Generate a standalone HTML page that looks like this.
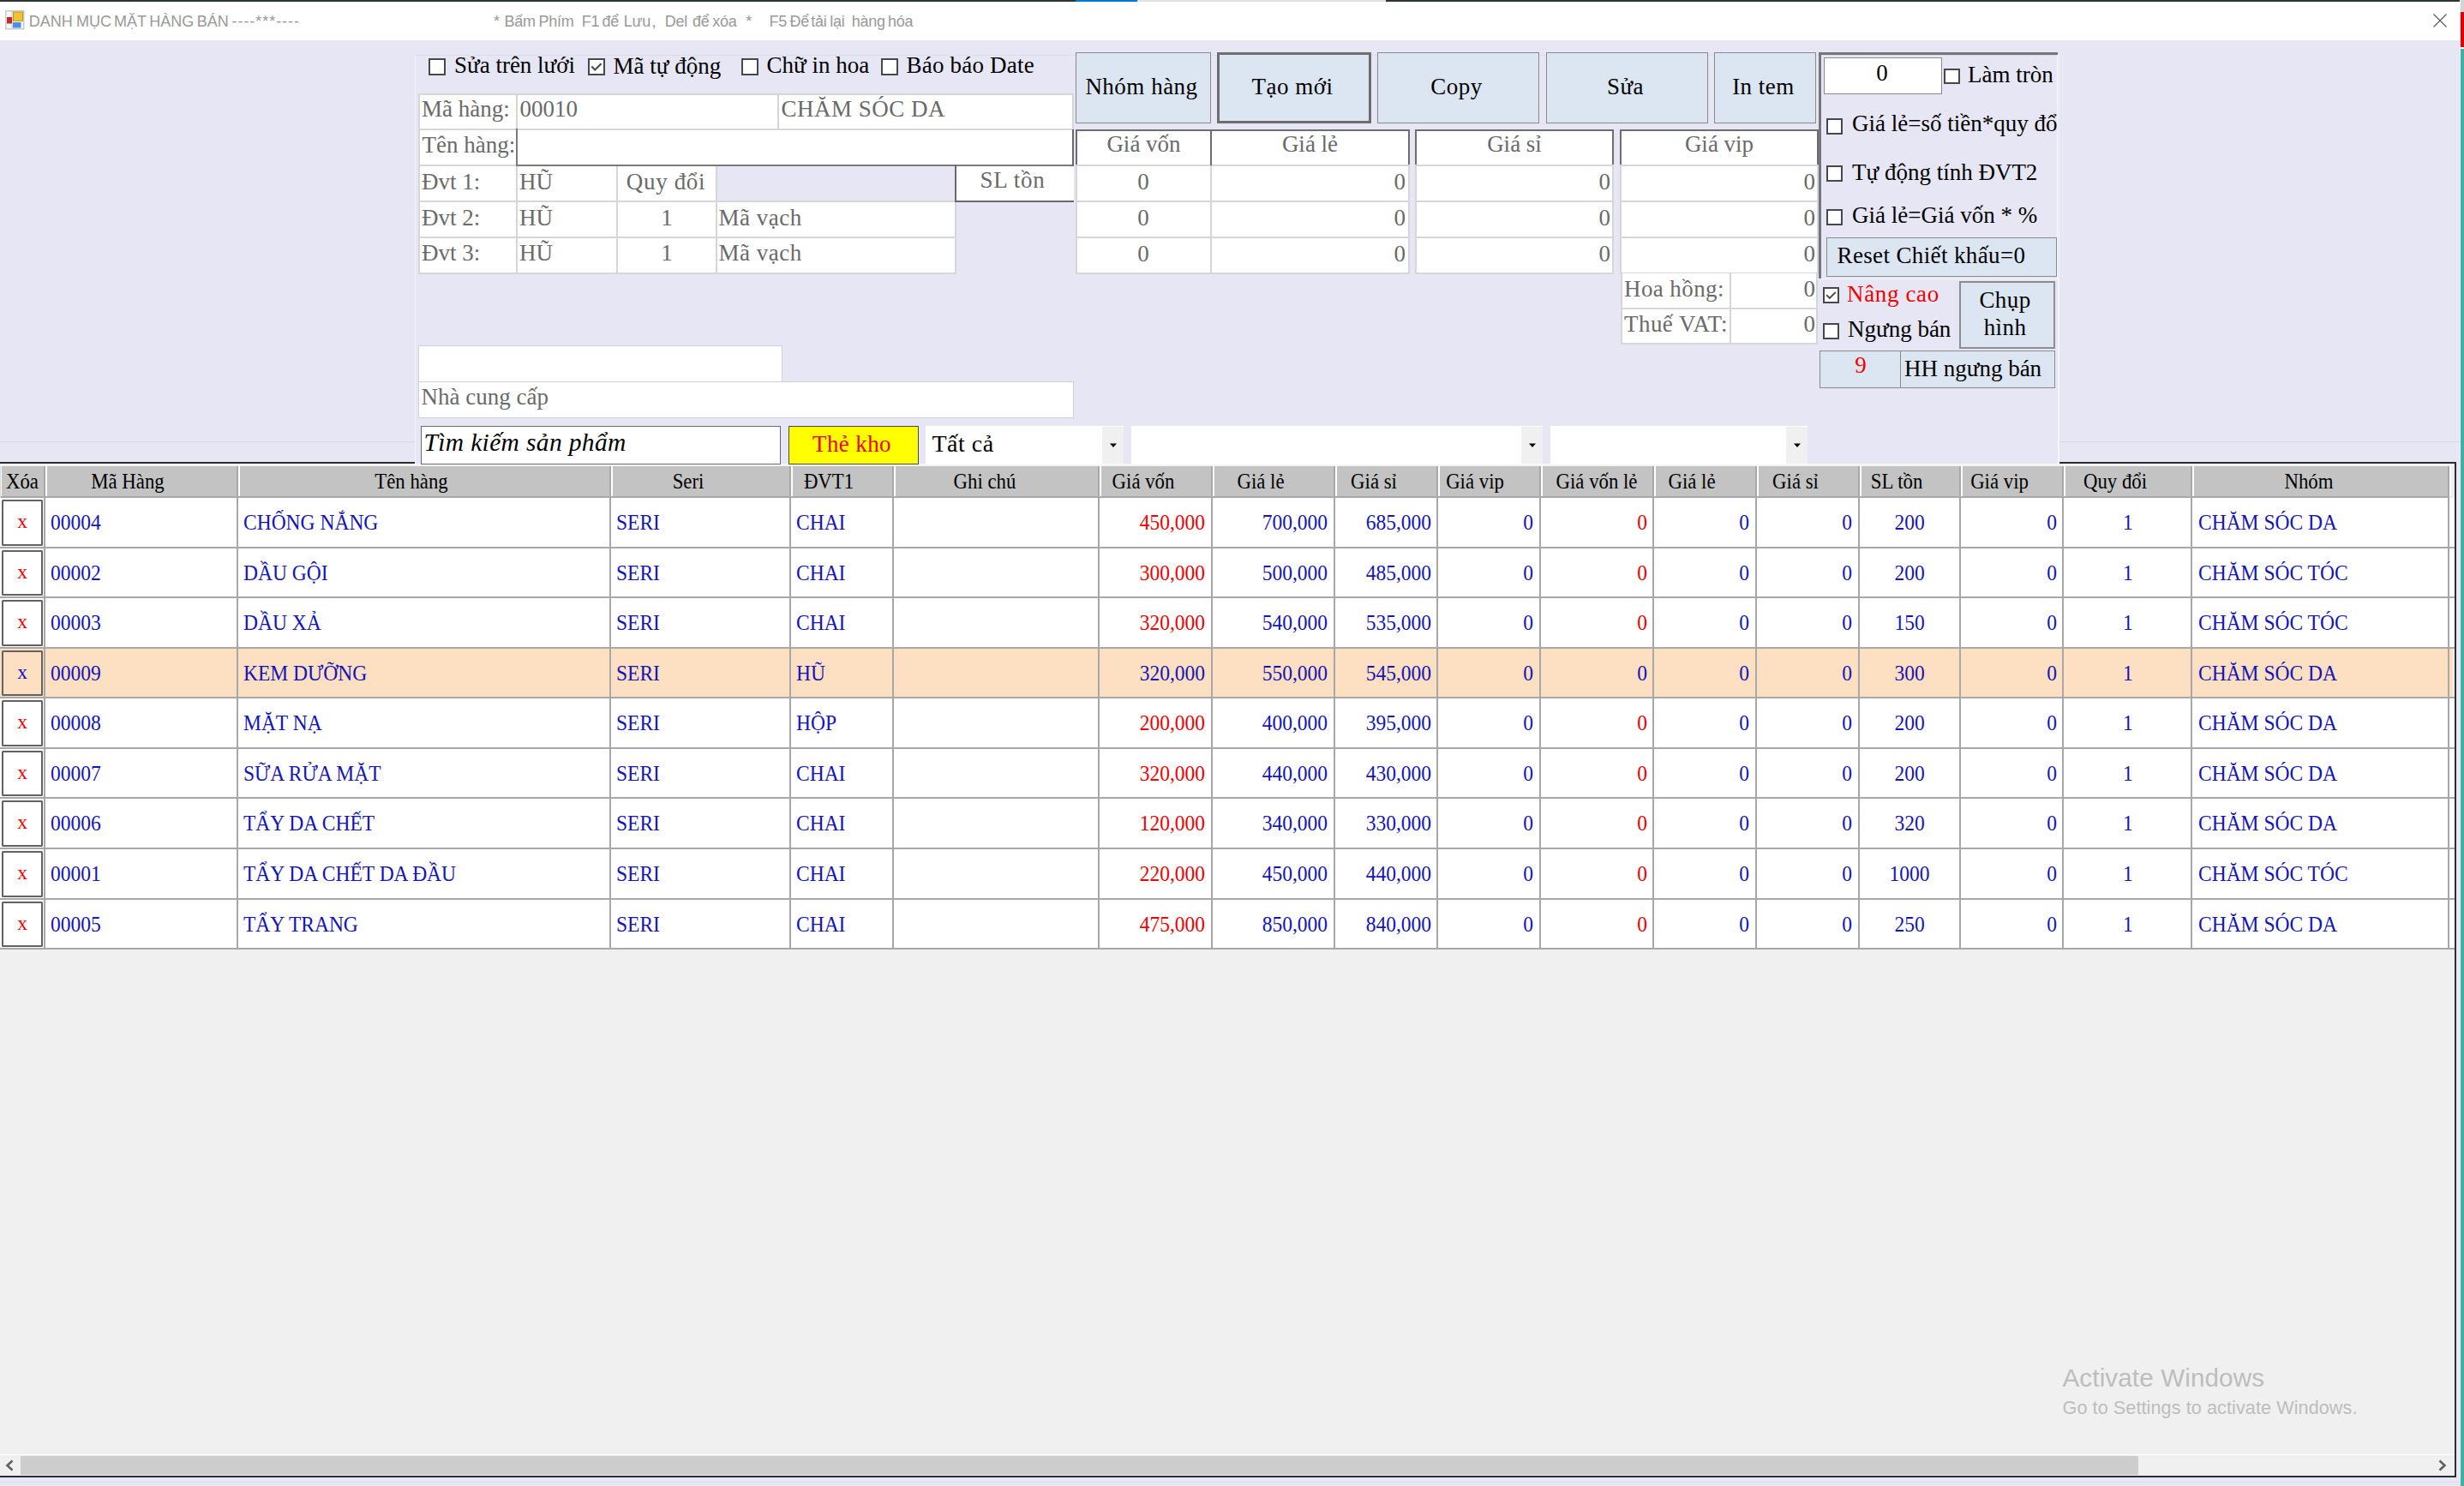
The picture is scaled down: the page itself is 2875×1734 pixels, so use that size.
<!DOCTYPE html><html><head><meta charset="utf-8"><title>DANH MỤC MẶT HÀNG BÁN</title><style>html,body{margin:0;padding:0;}body{width:2875px;height:1734px;position:relative;overflow:hidden;background:#E6E6F4;}body>div,body>svg{position:absolute;}</style></head><body><div style="left:0px;top:0px;width:2871px;height:47px;background:#FFFFFF;"></div><div style="left:0px;top:47px;width:2871px;height:1687px;background:#E6E6F4;"></div><div style="left:0px;top:0px;width:1255px;height:2px;background:#2B3632;"></div><div style="left:1255px;top:0px;width:72px;height:2px;background:#0078D7;"></div><div style="left:1327px;top:0px;width:290px;height:2px;background:#E2E2E2;"></div><div style="left:1617px;top:0px;width:1254px;height:2px;background:#2B3632;"></div><div style="left:2870px;top:0px;width:1px;height:1734px;background:#F4F4F8;"></div><div style="left:2871px;top:0px;width:4px;height:14px;background:#D4D4D4;"></div><div style="left:2871px;top:14px;width:4px;height:41px;background:#E00000;"></div><div style="left:2871px;top:55px;width:4px;height:2px;background:#FFFFFF;"></div><div style="left:2871px;top:57px;width:4px;height:1677px;background:#3EB0A4;"></div><svg style="left:6px;top:12px" width="23" height="23" viewBox="0 0 23 23"><rect x="0.8" y="0.8" width="21" height="21" fill="#F8F8F8" stroke="#BDBDBD" stroke-width="1.2"/><line x1="8" y1="1" x2="8" y2="22" stroke="#C8C8C8" stroke-width="1"/><rect x="2" y="8" width="6" height="7.5" fill="#C0292B"/><rect x="9.5" y="2" width="11" height="10.5" fill="#F2C230" stroke="#B08A10" stroke-width="0.8"/><rect x="9" y="14" width="9.5" height="6.5" fill="#4A90E2"/></svg><div style="top:15.92px;font-family:'Liberation Sans', sans-serif;font-size:18px;line-height:18px;color:#999999;white-space:pre;left:33.80px;">DANH</div><div style="top:15.92px;font-family:'Liberation Sans', sans-serif;font-size:18px;line-height:18px;color:#999999;white-space:pre;left:89.10px;">MỤC</div><div style="top:15.92px;font-family:'Liberation Sans', sans-serif;font-size:18px;line-height:18px;color:#999999;white-space:pre;left:132.90px;">MẶT</div><div style="top:15.92px;font-family:'Liberation Sans', sans-serif;font-size:18px;line-height:18px;color:#999999;white-space:pre;left:174.30px;">HÀNG</div><div style="top:15.92px;font-family:'Liberation Sans', sans-serif;font-size:18px;line-height:18px;color:#999999;white-space:pre;left:229.80px;">BÁN</div><div style="top:15.92px;font-family:'Liberation Sans', sans-serif;font-size:18px;line-height:18px;color:#999999;white-space:pre;left:270.50px;letter-spacing:0.95px;">----***----</div><div style="top:15.92px;font-family:'Liberation Sans', sans-serif;font-size:18px;line-height:18px;color:#999999;white-space:pre;left:575.90px;letter-spacing:-0.25px;">*</div><div style="top:15.92px;font-family:'Liberation Sans', sans-serif;font-size:18px;line-height:18px;color:#999999;white-space:pre;left:588.50px;letter-spacing:-0.25px;">Bấm</div><div style="top:15.92px;font-family:'Liberation Sans', sans-serif;font-size:18px;line-height:18px;color:#999999;white-space:pre;left:628.60px;letter-spacing:-0.25px;">Phím</div><div style="top:15.92px;font-family:'Liberation Sans', sans-serif;font-size:18px;line-height:18px;color:#999999;white-space:pre;left:678.80px;letter-spacing:-0.25px;">F1</div><div style="top:15.92px;font-family:'Liberation Sans', sans-serif;font-size:18px;line-height:18px;color:#999999;white-space:pre;left:702.50px;letter-spacing:-0.25px;">để</div><div style="top:15.92px;font-family:'Liberation Sans', sans-serif;font-size:18px;line-height:18px;color:#999999;white-space:pre;left:727.80px;letter-spacing:-0.25px;">Lưu</div><div style="top:15.92px;font-family:'Liberation Sans', sans-serif;font-size:18px;line-height:18px;color:#999999;white-space:pre;left:760.50px;letter-spacing:-0.25px;">,</div><div style="top:15.92px;font-family:'Liberation Sans', sans-serif;font-size:18px;line-height:18px;color:#999999;white-space:pre;left:775.80px;letter-spacing:-0.25px;">Del</div><div style="top:15.92px;font-family:'Liberation Sans', sans-serif;font-size:18px;line-height:18px;color:#999999;white-space:pre;left:808.00px;letter-spacing:-0.25px;">để</div><div style="top:15.92px;font-family:'Liberation Sans', sans-serif;font-size:18px;line-height:18px;color:#999999;white-space:pre;left:831.20px;letter-spacing:-0.25px;">xóa</div><div style="top:15.92px;font-family:'Liberation Sans', sans-serif;font-size:18px;line-height:18px;color:#999999;white-space:pre;left:870.20px;letter-spacing:-0.25px;">*</div><div style="top:15.92px;font-family:'Liberation Sans', sans-serif;font-size:18px;line-height:18px;color:#999999;white-space:pre;left:897.60px;letter-spacing:-0.25px;">F5</div><div style="top:15.92px;font-family:'Liberation Sans', sans-serif;font-size:18px;line-height:18px;color:#999999;white-space:pre;left:921.40px;letter-spacing:-0.25px;">Để</div><div style="top:15.92px;font-family:'Liberation Sans', sans-serif;font-size:18px;line-height:18px;color:#999999;white-space:pre;left:946.20px;letter-spacing:-0.25px;">tải</div><div style="top:15.92px;font-family:'Liberation Sans', sans-serif;font-size:18px;line-height:18px;color:#999999;white-space:pre;left:968.30px;letter-spacing:-0.25px;">lại</div><div style="top:15.92px;font-family:'Liberation Sans', sans-serif;font-size:18px;line-height:18px;color:#999999;white-space:pre;left:993.70px;letter-spacing:-0.25px;">hàng</div><div style="top:15.92px;font-family:'Liberation Sans', sans-serif;font-size:18px;line-height:18px;color:#999999;white-space:pre;left:1035.90px;letter-spacing:-0.25px;">hóa</div><svg style="left:2839px;top:16px" width="16" height="16" viewBox="0 0 16 16"><path d="M0.5 0.5 L15.5 15.5 M15.5 0.5 L0.5 15.5" stroke="#555" stroke-width="1.1"/></svg><div style="left:0px;top:515px;width:2871px;height:1px;background:#D8D8E6;"></div><div style="left:0px;top:539px;width:2866px;height:2px;background:#2C2C2C;"></div><div style="left:0px;top:541px;width:2864px;height:1181px;background:#F0F0F0;"></div><div style="left:0px;top:1722px;width:2866px;height:2px;background:#2C2C2C;"></div><div style="left:2864px;top:539px;width:2px;height:1185px;background:#2C2C2C;"></div><div style="left:0px;top:1724px;width:2871px;height:10px;background:#E6E6F4;"></div><div style="left:0px;top:1729px;width:2871px;height:1px;background:#DCDCEA;"></div><div style="left:0px;top:541px;width:2864px;height:3px;background:#F4F4F4;"></div><div style="left:0px;top:544px;width:2858px;height:35px;background:#C3C3C3;"></div><div style="left:0px;top:579px;width:2858px;height:2px;background:#A8A8A8;"></div><div style="left:0px;top:544px;width:1px;height:37px;background:#D8D8D8;"></div><div style="left:1px;top:544px;width:1px;height:35px;background:#FFFFFF;"></div><div style="top:549.98px;font-family:'Liberation Serif', serif;font-size:24.5px;line-height:24.5px;color:#000;white-space:pre;left:-124.30px;width:300px;text-align:center;transform:scaleX(0.93);transform-origin:center 50%;">Xóa</div><div style="top:549.98px;font-family:'Liberation Serif', serif;font-size:24.5px;line-height:24.5px;color:#000;white-space:pre;left:-1.20px;width:300px;text-align:center;transform:scaleX(0.93);transform-origin:center 50%;">Mã Hàng</div><div style="top:549.98px;font-family:'Liberation Serif', serif;font-size:24.5px;line-height:24.5px;color:#000;white-space:pre;left:330.20px;width:300px;text-align:center;transform:scaleX(0.93);transform-origin:center 50%;">Tên hàng</div><div style="top:549.98px;font-family:'Liberation Serif', serif;font-size:24.5px;line-height:24.5px;color:#000;white-space:pre;left:652.50px;width:300px;text-align:center;transform:scaleX(0.93);transform-origin:center 50%;">Seri</div><div style="top:549.98px;font-family:'Liberation Serif', serif;font-size:24.5px;line-height:24.5px;color:#000;white-space:pre;left:816.70px;width:300px;text-align:center;transform:scaleX(0.93);transform-origin:center 50%;">ĐVT1</div><div style="top:549.98px;font-family:'Liberation Serif', serif;font-size:24.5px;line-height:24.5px;color:#000;white-space:pre;left:998.50px;width:300px;text-align:center;transform:scaleX(0.93);transform-origin:center 50%;">Ghi chú</div><div style="top:549.98px;font-family:'Liberation Serif', serif;font-size:24.5px;line-height:24.5px;color:#000;white-space:pre;left:1183.60px;width:300px;text-align:center;transform:scaleX(0.93);transform-origin:center 50%;">Giá vốn</div><div style="top:549.98px;font-family:'Liberation Serif', serif;font-size:24.5px;line-height:24.5px;color:#000;white-space:pre;left:1321.10px;width:300px;text-align:center;transform:scaleX(0.93);transform-origin:center 50%;">Giá lẻ</div><div style="top:549.98px;font-family:'Liberation Serif', serif;font-size:24.5px;line-height:24.5px;color:#000;white-space:pre;left:1453.10px;width:300px;text-align:center;transform:scaleX(0.93);transform-origin:center 50%;">Giá sỉ</div><div style="top:549.98px;font-family:'Liberation Serif', serif;font-size:24.5px;line-height:24.5px;color:#000;white-space:pre;left:1571.40px;width:300px;text-align:center;transform:scaleX(0.93);transform-origin:center 50%;">Giá vip</div><div style="top:549.98px;font-family:'Liberation Serif', serif;font-size:24.5px;line-height:24.5px;color:#000;white-space:pre;left:1713.20px;width:300px;text-align:center;transform:scaleX(0.93);transform-origin:center 50%;">Giá vốn lẻ</div><div style="top:549.98px;font-family:'Liberation Serif', serif;font-size:24.5px;line-height:24.5px;color:#000;white-space:pre;left:1824.20px;width:300px;text-align:center;transform:scaleX(0.93);transform-origin:center 50%;">Giá lẻ</div><div style="top:549.98px;font-family:'Liberation Serif', serif;font-size:24.5px;line-height:24.5px;color:#000;white-space:pre;left:1944.70px;width:300px;text-align:center;transform:scaleX(0.93);transform-origin:center 50%;">Giá sỉ</div><div style="top:549.98px;font-family:'Liberation Serif', serif;font-size:24.5px;line-height:24.5px;color:#000;white-space:pre;left:2063.20px;width:300px;text-align:center;transform:scaleX(0.93);transform-origin:center 50%;">SL tồn</div><div style="top:549.98px;font-family:'Liberation Serif', serif;font-size:24.5px;line-height:24.5px;color:#000;white-space:pre;left:2182.80px;width:300px;text-align:center;transform:scaleX(0.93);transform-origin:center 50%;">Giá vip</div><div style="top:549.98px;font-family:'Liberation Serif', serif;font-size:24.5px;line-height:24.5px;color:#000;white-space:pre;left:2317.60px;width:300px;text-align:center;transform:scaleX(0.93);transform-origin:center 50%;">Quy đổi</div><div style="top:549.98px;font-family:'Liberation Serif', serif;font-size:24.5px;line-height:24.5px;color:#000;white-space:pre;left:2543.80px;width:300px;text-align:center;transform:scaleX(0.93);transform-origin:center 50%;">Nhóm</div><div style="left:51px;top:544px;width:2px;height:35px;background:#A8A8A8;"></div><div style="left:53px;top:544px;width:2px;height:35px;background:#FFFFFF;"></div><div style="left:276px;top:544px;width:2px;height:35px;background:#A8A8A8;"></div><div style="left:278px;top:544px;width:2px;height:35px;background:#FFFFFF;"></div><div style="left:711px;top:544px;width:2px;height:35px;background:#A8A8A8;"></div><div style="left:713px;top:544px;width:2px;height:35px;background:#FFFFFF;"></div><div style="left:921px;top:544px;width:2px;height:35px;background:#A8A8A8;"></div><div style="left:923px;top:544px;width:2px;height:35px;background:#FFFFFF;"></div><div style="left:1041px;top:544px;width:2px;height:35px;background:#A8A8A8;"></div><div style="left:1043px;top:544px;width:2px;height:35px;background:#FFFFFF;"></div><div style="left:1281px;top:544px;width:2px;height:35px;background:#A8A8A8;"></div><div style="left:1283px;top:544px;width:2px;height:35px;background:#FFFFFF;"></div><div style="left:1413px;top:544px;width:2px;height:35px;background:#A8A8A8;"></div><div style="left:1415px;top:544px;width:2px;height:35px;background:#FFFFFF;"></div><div style="left:1556px;top:544px;width:2px;height:35px;background:#A8A8A8;"></div><div style="left:1558px;top:544px;width:2px;height:35px;background:#FFFFFF;"></div><div style="left:1676px;top:544px;width:2px;height:35px;background:#A8A8A8;"></div><div style="left:1678px;top:544px;width:2px;height:35px;background:#FFFFFF;"></div><div style="left:1796px;top:544px;width:2px;height:35px;background:#A8A8A8;"></div><div style="left:1798px;top:544px;width:2px;height:35px;background:#FFFFFF;"></div><div style="left:1928px;top:544px;width:2px;height:35px;background:#A8A8A8;"></div><div style="left:1930px;top:544px;width:2px;height:35px;background:#FFFFFF;"></div><div style="left:2048px;top:544px;width:2px;height:35px;background:#A8A8A8;"></div><div style="left:2050px;top:544px;width:2px;height:35px;background:#FFFFFF;"></div><div style="left:2168px;top:544px;width:2px;height:35px;background:#A8A8A8;"></div><div style="left:2170px;top:544px;width:2px;height:35px;background:#FFFFFF;"></div><div style="left:2286px;top:544px;width:2px;height:35px;background:#A8A8A8;"></div><div style="left:2288px;top:544px;width:2px;height:35px;background:#FFFFFF;"></div><div style="left:2406px;top:544px;width:2px;height:35px;background:#A8A8A8;"></div><div style="left:2408px;top:544px;width:2px;height:35px;background:#FFFFFF;"></div><div style="left:2556px;top:544px;width:2px;height:35px;background:#A8A8A8;"></div><div style="left:2558px;top:544px;width:2px;height:35px;background:#FFFFFF;"></div><div style="left:2856px;top:544px;width:2px;height:35px;background:#A8A8A8;"></div><div style="left:2858px;top:544px;width:2px;height:35px;background:#FFFFFF;"></div><div style="left:0px;top:581px;width:2864px;height:57px;background:#FFFFFF;"></div><div style="left:2858px;top:581px;width:6px;height:57px;background:#FFFFFF;"></div><div style="left:0px;top:638px;width:2864px;height:2px;background:#A8A8A8;"></div><div style="left:51px;top:581px;width:2px;height:59px;background:#A8A8A8;"></div><div style="left:276px;top:581px;width:2px;height:59px;background:#A8A8A8;"></div><div style="left:711px;top:581px;width:2px;height:59px;background:#A8A8A8;"></div><div style="left:921px;top:581px;width:2px;height:59px;background:#A8A8A8;"></div><div style="left:1041px;top:581px;width:2px;height:59px;background:#A8A8A8;"></div><div style="left:1281px;top:581px;width:2px;height:59px;background:#A8A8A8;"></div><div style="left:1413px;top:581px;width:2px;height:59px;background:#A8A8A8;"></div><div style="left:1556px;top:581px;width:2px;height:59px;background:#A8A8A8;"></div><div style="left:1676px;top:581px;width:2px;height:59px;background:#A8A8A8;"></div><div style="left:1796px;top:581px;width:2px;height:59px;background:#A8A8A8;"></div><div style="left:1928px;top:581px;width:2px;height:59px;background:#A8A8A8;"></div><div style="left:2048px;top:581px;width:2px;height:59px;background:#A8A8A8;"></div><div style="left:2168px;top:581px;width:2px;height:59px;background:#A8A8A8;"></div><div style="left:2286px;top:581px;width:2px;height:59px;background:#A8A8A8;"></div><div style="left:2406px;top:581px;width:2px;height:59px;background:#A8A8A8;"></div><div style="left:2556px;top:581px;width:2px;height:59px;background:#A8A8A8;"></div><div style="left:2856px;top:581px;width:2px;height:59px;background:#A8A8A8;"></div><div style="left:2px;top:583px;width:48px;height:54px;background:#FFFFFF;border:2px solid #626262;box-sizing:border-box;border-radius:1.5px;"></div><div style="top:597.32px;font-family:'Liberation Serif', serif;font-size:23.5px;line-height:23.5px;color:#F00000;white-space:pre;left:6.00px;width:40px;text-align:center;">x</div><div style="top:597.06px;font-family:'Liberation Serif', serif;font-size:25px;line-height:25px;color:#1414B8;white-space:pre;left:59.00px;transform:scaleX(0.94);transform-origin:left 50%;">00004</div><div style="top:597.06px;font-family:'Liberation Serif', serif;font-size:25px;line-height:25px;color:#1414B8;white-space:pre;left:284.00px;transform:scaleX(0.94);transform-origin:left 50%;">CHỐNG NẮNG</div><div style="top:597.06px;font-family:'Liberation Serif', serif;font-size:25px;line-height:25px;color:#1414B8;white-space:pre;left:719.00px;transform:scaleX(0.94);transform-origin:left 50%;">SERI</div><div style="top:597.06px;font-family:'Liberation Serif', serif;font-size:25px;line-height:25px;color:#1414B8;white-space:pre;left:929.00px;transform:scaleX(0.94);transform-origin:left 50%;">CHAI</div><div style="top:597.06px;font-family:'Liberation Serif', serif;font-size:25px;line-height:25px;color:#F00000;white-space:pre;left:1206.00px;width:200px;text-align:right;transform:scaleX(0.94);transform-origin:right 50%;">450,000</div><div style="top:597.06px;font-family:'Liberation Serif', serif;font-size:25px;line-height:25px;color:#1414B8;white-space:pre;left:1349.00px;width:200px;text-align:right;transform:scaleX(0.94);transform-origin:right 50%;">700,000</div><div style="top:597.06px;font-family:'Liberation Serif', serif;font-size:25px;line-height:25px;color:#1414B8;white-space:pre;left:1470.00px;width:200px;text-align:right;transform:scaleX(0.94);transform-origin:right 50%;">685,000</div><div style="top:597.06px;font-family:'Liberation Serif', serif;font-size:25px;line-height:25px;color:#1414B8;white-space:pre;left:1589.00px;width:200px;text-align:right;transform:scaleX(0.94);transform-origin:right 50%;">0</div><div style="top:597.06px;font-family:'Liberation Serif', serif;font-size:25px;line-height:25px;color:#F00000;white-space:pre;left:1722.00px;width:200px;text-align:right;transform:scaleX(0.94);transform-origin:right 50%;">0</div><div style="top:597.06px;font-family:'Liberation Serif', serif;font-size:25px;line-height:25px;color:#1414B8;white-space:pre;left:1841.00px;width:200px;text-align:right;transform:scaleX(0.94);transform-origin:right 50%;">0</div><div style="top:597.06px;font-family:'Liberation Serif', serif;font-size:25px;line-height:25px;color:#1414B8;white-space:pre;left:1961.00px;width:200px;text-align:right;transform:scaleX(0.94);transform-origin:right 50%;">0</div><div style="top:597.06px;font-family:'Liberation Serif', serif;font-size:25px;line-height:25px;color:#1414B8;white-space:pre;left:2200.00px;width:200px;text-align:right;transform:scaleX(0.94);transform-origin:right 50%;">0</div><div style="top:597.06px;font-family:'Liberation Serif', serif;font-size:25px;line-height:25px;color:#1414B8;white-space:pre;left:2172.50px;width:110px;text-align:center;transform:scaleX(0.94);transform-origin:center 50%;">200</div><div style="top:597.06px;font-family:'Liberation Serif', serif;font-size:25px;line-height:25px;color:#1414B8;white-space:pre;left:2413.00px;width:140px;text-align:center;transform:scaleX(0.94);transform-origin:center 50%;">1</div><div style="top:597.06px;font-family:'Liberation Serif', serif;font-size:25px;line-height:25px;color:#1414B8;white-space:pre;left:2565.00px;transform:scaleX(0.94);transform-origin:left 50%;">CHĂM SÓC DA</div><div style="left:0px;top:640px;width:2864px;height:56px;background:#FFFFFF;"></div><div style="left:2858px;top:640px;width:6px;height:56px;background:#FFFFFF;"></div><div style="left:0px;top:696px;width:2864px;height:2px;background:#A8A8A8;"></div><div style="left:51px;top:640px;width:2px;height:58px;background:#A8A8A8;"></div><div style="left:276px;top:640px;width:2px;height:58px;background:#A8A8A8;"></div><div style="left:711px;top:640px;width:2px;height:58px;background:#A8A8A8;"></div><div style="left:921px;top:640px;width:2px;height:58px;background:#A8A8A8;"></div><div style="left:1041px;top:640px;width:2px;height:58px;background:#A8A8A8;"></div><div style="left:1281px;top:640px;width:2px;height:58px;background:#A8A8A8;"></div><div style="left:1413px;top:640px;width:2px;height:58px;background:#A8A8A8;"></div><div style="left:1556px;top:640px;width:2px;height:58px;background:#A8A8A8;"></div><div style="left:1676px;top:640px;width:2px;height:58px;background:#A8A8A8;"></div><div style="left:1796px;top:640px;width:2px;height:58px;background:#A8A8A8;"></div><div style="left:1928px;top:640px;width:2px;height:58px;background:#A8A8A8;"></div><div style="left:2048px;top:640px;width:2px;height:58px;background:#A8A8A8;"></div><div style="left:2168px;top:640px;width:2px;height:58px;background:#A8A8A8;"></div><div style="left:2286px;top:640px;width:2px;height:58px;background:#A8A8A8;"></div><div style="left:2406px;top:640px;width:2px;height:58px;background:#A8A8A8;"></div><div style="left:2556px;top:640px;width:2px;height:58px;background:#A8A8A8;"></div><div style="left:2856px;top:640px;width:2px;height:58px;background:#A8A8A8;"></div><div style="left:2px;top:642px;width:48px;height:53px;background:#FFFFFF;border:2px solid #626262;box-sizing:border-box;border-radius:1.5px;"></div><div style="top:656.32px;font-family:'Liberation Serif', serif;font-size:23.5px;line-height:23.5px;color:#F00000;white-space:pre;left:6.00px;width:40px;text-align:center;">x</div><div style="top:656.06px;font-family:'Liberation Serif', serif;font-size:25px;line-height:25px;color:#1414B8;white-space:pre;left:59.00px;transform:scaleX(0.94);transform-origin:left 50%;">00002</div><div style="top:656.06px;font-family:'Liberation Serif', serif;font-size:25px;line-height:25px;color:#1414B8;white-space:pre;left:284.00px;transform:scaleX(0.94);transform-origin:left 50%;">DẦU GỘI</div><div style="top:656.06px;font-family:'Liberation Serif', serif;font-size:25px;line-height:25px;color:#1414B8;white-space:pre;left:719.00px;transform:scaleX(0.94);transform-origin:left 50%;">SERI</div><div style="top:656.06px;font-family:'Liberation Serif', serif;font-size:25px;line-height:25px;color:#1414B8;white-space:pre;left:929.00px;transform:scaleX(0.94);transform-origin:left 50%;">CHAI</div><div style="top:656.06px;font-family:'Liberation Serif', serif;font-size:25px;line-height:25px;color:#F00000;white-space:pre;left:1206.00px;width:200px;text-align:right;transform:scaleX(0.94);transform-origin:right 50%;">300,000</div><div style="top:656.06px;font-family:'Liberation Serif', serif;font-size:25px;line-height:25px;color:#1414B8;white-space:pre;left:1349.00px;width:200px;text-align:right;transform:scaleX(0.94);transform-origin:right 50%;">500,000</div><div style="top:656.06px;font-family:'Liberation Serif', serif;font-size:25px;line-height:25px;color:#1414B8;white-space:pre;left:1470.00px;width:200px;text-align:right;transform:scaleX(0.94);transform-origin:right 50%;">485,000</div><div style="top:656.06px;font-family:'Liberation Serif', serif;font-size:25px;line-height:25px;color:#1414B8;white-space:pre;left:1589.00px;width:200px;text-align:right;transform:scaleX(0.94);transform-origin:right 50%;">0</div><div style="top:656.06px;font-family:'Liberation Serif', serif;font-size:25px;line-height:25px;color:#F00000;white-space:pre;left:1722.00px;width:200px;text-align:right;transform:scaleX(0.94);transform-origin:right 50%;">0</div><div style="top:656.06px;font-family:'Liberation Serif', serif;font-size:25px;line-height:25px;color:#1414B8;white-space:pre;left:1841.00px;width:200px;text-align:right;transform:scaleX(0.94);transform-origin:right 50%;">0</div><div style="top:656.06px;font-family:'Liberation Serif', serif;font-size:25px;line-height:25px;color:#1414B8;white-space:pre;left:1961.00px;width:200px;text-align:right;transform:scaleX(0.94);transform-origin:right 50%;">0</div><div style="top:656.06px;font-family:'Liberation Serif', serif;font-size:25px;line-height:25px;color:#1414B8;white-space:pre;left:2200.00px;width:200px;text-align:right;transform:scaleX(0.94);transform-origin:right 50%;">0</div><div style="top:656.06px;font-family:'Liberation Serif', serif;font-size:25px;line-height:25px;color:#1414B8;white-space:pre;left:2172.50px;width:110px;text-align:center;transform:scaleX(0.94);transform-origin:center 50%;">200</div><div style="top:656.06px;font-family:'Liberation Serif', serif;font-size:25px;line-height:25px;color:#1414B8;white-space:pre;left:2413.00px;width:140px;text-align:center;transform:scaleX(0.94);transform-origin:center 50%;">1</div><div style="top:656.06px;font-family:'Liberation Serif', serif;font-size:25px;line-height:25px;color:#1414B8;white-space:pre;left:2565.00px;transform:scaleX(0.94);transform-origin:left 50%;">CHĂM SÓC TÓC</div><div style="left:0px;top:698px;width:2864px;height:57px;background:#FFFFFF;"></div><div style="left:2858px;top:698px;width:6px;height:57px;background:#FFFFFF;"></div><div style="left:0px;top:755px;width:2864px;height:2px;background:#A8A8A8;"></div><div style="left:51px;top:698px;width:2px;height:59px;background:#A8A8A8;"></div><div style="left:276px;top:698px;width:2px;height:59px;background:#A8A8A8;"></div><div style="left:711px;top:698px;width:2px;height:59px;background:#A8A8A8;"></div><div style="left:921px;top:698px;width:2px;height:59px;background:#A8A8A8;"></div><div style="left:1041px;top:698px;width:2px;height:59px;background:#A8A8A8;"></div><div style="left:1281px;top:698px;width:2px;height:59px;background:#A8A8A8;"></div><div style="left:1413px;top:698px;width:2px;height:59px;background:#A8A8A8;"></div><div style="left:1556px;top:698px;width:2px;height:59px;background:#A8A8A8;"></div><div style="left:1676px;top:698px;width:2px;height:59px;background:#A8A8A8;"></div><div style="left:1796px;top:698px;width:2px;height:59px;background:#A8A8A8;"></div><div style="left:1928px;top:698px;width:2px;height:59px;background:#A8A8A8;"></div><div style="left:2048px;top:698px;width:2px;height:59px;background:#A8A8A8;"></div><div style="left:2168px;top:698px;width:2px;height:59px;background:#A8A8A8;"></div><div style="left:2286px;top:698px;width:2px;height:59px;background:#A8A8A8;"></div><div style="left:2406px;top:698px;width:2px;height:59px;background:#A8A8A8;"></div><div style="left:2556px;top:698px;width:2px;height:59px;background:#A8A8A8;"></div><div style="left:2856px;top:698px;width:2px;height:59px;background:#A8A8A8;"></div><div style="left:2px;top:700px;width:48px;height:54px;background:#FFFFFF;border:2px solid #626262;box-sizing:border-box;border-radius:1.5px;"></div><div style="top:714.32px;font-family:'Liberation Serif', serif;font-size:23.5px;line-height:23.5px;color:#F00000;white-space:pre;left:6.00px;width:40px;text-align:center;">x</div><div style="top:714.06px;font-family:'Liberation Serif', serif;font-size:25px;line-height:25px;color:#1414B8;white-space:pre;left:59.00px;transform:scaleX(0.94);transform-origin:left 50%;">00003</div><div style="top:714.06px;font-family:'Liberation Serif', serif;font-size:25px;line-height:25px;color:#1414B8;white-space:pre;left:284.00px;transform:scaleX(0.94);transform-origin:left 50%;">DẦU XẢ</div><div style="top:714.06px;font-family:'Liberation Serif', serif;font-size:25px;line-height:25px;color:#1414B8;white-space:pre;left:719.00px;transform:scaleX(0.94);transform-origin:left 50%;">SERI</div><div style="top:714.06px;font-family:'Liberation Serif', serif;font-size:25px;line-height:25px;color:#1414B8;white-space:pre;left:929.00px;transform:scaleX(0.94);transform-origin:left 50%;">CHAI</div><div style="top:714.06px;font-family:'Liberation Serif', serif;font-size:25px;line-height:25px;color:#F00000;white-space:pre;left:1206.00px;width:200px;text-align:right;transform:scaleX(0.94);transform-origin:right 50%;">320,000</div><div style="top:714.06px;font-family:'Liberation Serif', serif;font-size:25px;line-height:25px;color:#1414B8;white-space:pre;left:1349.00px;width:200px;text-align:right;transform:scaleX(0.94);transform-origin:right 50%;">540,000</div><div style="top:714.06px;font-family:'Liberation Serif', serif;font-size:25px;line-height:25px;color:#1414B8;white-space:pre;left:1470.00px;width:200px;text-align:right;transform:scaleX(0.94);transform-origin:right 50%;">535,000</div><div style="top:714.06px;font-family:'Liberation Serif', serif;font-size:25px;line-height:25px;color:#1414B8;white-space:pre;left:1589.00px;width:200px;text-align:right;transform:scaleX(0.94);transform-origin:right 50%;">0</div><div style="top:714.06px;font-family:'Liberation Serif', serif;font-size:25px;line-height:25px;color:#F00000;white-space:pre;left:1722.00px;width:200px;text-align:right;transform:scaleX(0.94);transform-origin:right 50%;">0</div><div style="top:714.06px;font-family:'Liberation Serif', serif;font-size:25px;line-height:25px;color:#1414B8;white-space:pre;left:1841.00px;width:200px;text-align:right;transform:scaleX(0.94);transform-origin:right 50%;">0</div><div style="top:714.06px;font-family:'Liberation Serif', serif;font-size:25px;line-height:25px;color:#1414B8;white-space:pre;left:1961.00px;width:200px;text-align:right;transform:scaleX(0.94);transform-origin:right 50%;">0</div><div style="top:714.06px;font-family:'Liberation Serif', serif;font-size:25px;line-height:25px;color:#1414B8;white-space:pre;left:2200.00px;width:200px;text-align:right;transform:scaleX(0.94);transform-origin:right 50%;">0</div><div style="top:714.06px;font-family:'Liberation Serif', serif;font-size:25px;line-height:25px;color:#1414B8;white-space:pre;left:2172.50px;width:110px;text-align:center;transform:scaleX(0.94);transform-origin:center 50%;">150</div><div style="top:714.06px;font-family:'Liberation Serif', serif;font-size:25px;line-height:25px;color:#1414B8;white-space:pre;left:2413.00px;width:140px;text-align:center;transform:scaleX(0.94);transform-origin:center 50%;">1</div><div style="top:714.06px;font-family:'Liberation Serif', serif;font-size:25px;line-height:25px;color:#1414B8;white-space:pre;left:2565.00px;transform:scaleX(0.94);transform-origin:left 50%;">CHĂM SÓC TÓC</div><div style="left:0px;top:757px;width:2862px;height:56px;background:#FDDFC2;"></div><div style="left:0px;top:813px;width:2864px;height:2px;background:#A8A8A8;"></div><div style="left:51px;top:757px;width:2px;height:58px;background:#A8A8A8;"></div><div style="left:276px;top:757px;width:2px;height:58px;background:#A8A8A8;"></div><div style="left:711px;top:757px;width:2px;height:58px;background:#A8A8A8;"></div><div style="left:921px;top:757px;width:2px;height:58px;background:#A8A8A8;"></div><div style="left:1041px;top:757px;width:2px;height:58px;background:#A8A8A8;"></div><div style="left:1281px;top:757px;width:2px;height:58px;background:#A8A8A8;"></div><div style="left:1413px;top:757px;width:2px;height:58px;background:#A8A8A8;"></div><div style="left:1556px;top:757px;width:2px;height:58px;background:#A8A8A8;"></div><div style="left:1676px;top:757px;width:2px;height:58px;background:#A8A8A8;"></div><div style="left:1796px;top:757px;width:2px;height:58px;background:#A8A8A8;"></div><div style="left:1928px;top:757px;width:2px;height:58px;background:#A8A8A8;"></div><div style="left:2048px;top:757px;width:2px;height:58px;background:#A8A8A8;"></div><div style="left:2168px;top:757px;width:2px;height:58px;background:#A8A8A8;"></div><div style="left:2286px;top:757px;width:2px;height:58px;background:#A8A8A8;"></div><div style="left:2406px;top:757px;width:2px;height:58px;background:#A8A8A8;"></div><div style="left:2556px;top:757px;width:2px;height:58px;background:#A8A8A8;"></div><div style="left:2856px;top:757px;width:2px;height:58px;background:#A8A8A8;"></div><div style="left:2px;top:759px;width:48px;height:53px;background:#FDDFC2;border:2px solid #626262;box-sizing:border-box;border-radius:1.5px;"></div><div style="top:773.32px;font-family:'Liberation Serif', serif;font-size:23.5px;line-height:23.5px;color:#1414B8;white-space:pre;left:6.00px;width:40px;text-align:center;">x</div><div style="top:773.06px;font-family:'Liberation Serif', serif;font-size:25px;line-height:25px;color:#1414B8;white-space:pre;left:59.00px;transform:scaleX(0.94);transform-origin:left 50%;">00009</div><div style="top:773.06px;font-family:'Liberation Serif', serif;font-size:25px;line-height:25px;color:#1414B8;white-space:pre;left:284.00px;transform:scaleX(0.94);transform-origin:left 50%;">KEM DƯỠNG</div><div style="top:773.06px;font-family:'Liberation Serif', serif;font-size:25px;line-height:25px;color:#1414B8;white-space:pre;left:719.00px;transform:scaleX(0.94);transform-origin:left 50%;">SERI</div><div style="top:773.06px;font-family:'Liberation Serif', serif;font-size:25px;line-height:25px;color:#1414B8;white-space:pre;left:929.00px;transform:scaleX(0.94);transform-origin:left 50%;">HŨ</div><div style="top:773.06px;font-family:'Liberation Serif', serif;font-size:25px;line-height:25px;color:#1414B8;white-space:pre;left:1206.00px;width:200px;text-align:right;transform:scaleX(0.94);transform-origin:right 50%;">320,000</div><div style="top:773.06px;font-family:'Liberation Serif', serif;font-size:25px;line-height:25px;color:#1414B8;white-space:pre;left:1349.00px;width:200px;text-align:right;transform:scaleX(0.94);transform-origin:right 50%;">550,000</div><div style="top:773.06px;font-family:'Liberation Serif', serif;font-size:25px;line-height:25px;color:#1414B8;white-space:pre;left:1470.00px;width:200px;text-align:right;transform:scaleX(0.94);transform-origin:right 50%;">545,000</div><div style="top:773.06px;font-family:'Liberation Serif', serif;font-size:25px;line-height:25px;color:#1414B8;white-space:pre;left:1589.00px;width:200px;text-align:right;transform:scaleX(0.94);transform-origin:right 50%;">0</div><div style="top:773.06px;font-family:'Liberation Serif', serif;font-size:25px;line-height:25px;color:#1414B8;white-space:pre;left:1722.00px;width:200px;text-align:right;transform:scaleX(0.94);transform-origin:right 50%;">0</div><div style="top:773.06px;font-family:'Liberation Serif', serif;font-size:25px;line-height:25px;color:#1414B8;white-space:pre;left:1841.00px;width:200px;text-align:right;transform:scaleX(0.94);transform-origin:right 50%;">0</div><div style="top:773.06px;font-family:'Liberation Serif', serif;font-size:25px;line-height:25px;color:#1414B8;white-space:pre;left:1961.00px;width:200px;text-align:right;transform:scaleX(0.94);transform-origin:right 50%;">0</div><div style="top:773.06px;font-family:'Liberation Serif', serif;font-size:25px;line-height:25px;color:#1414B8;white-space:pre;left:2200.00px;width:200px;text-align:right;transform:scaleX(0.94);transform-origin:right 50%;">0</div><div style="top:773.06px;font-family:'Liberation Serif', serif;font-size:25px;line-height:25px;color:#1414B8;white-space:pre;left:2172.50px;width:110px;text-align:center;transform:scaleX(0.94);transform-origin:center 50%;">300</div><div style="top:773.06px;font-family:'Liberation Serif', serif;font-size:25px;line-height:25px;color:#1414B8;white-space:pre;left:2413.00px;width:140px;text-align:center;transform:scaleX(0.94);transform-origin:center 50%;">1</div><div style="top:773.06px;font-family:'Liberation Serif', serif;font-size:25px;line-height:25px;color:#1414B8;white-space:pre;left:2565.00px;transform:scaleX(0.94);transform-origin:left 50%;">CHĂM SÓC DA</div><div style="left:0px;top:815px;width:2864px;height:57px;background:#FFFFFF;"></div><div style="left:2858px;top:815px;width:6px;height:57px;background:#FFFFFF;"></div><div style="left:0px;top:872px;width:2864px;height:2px;background:#A8A8A8;"></div><div style="left:51px;top:815px;width:2px;height:59px;background:#A8A8A8;"></div><div style="left:276px;top:815px;width:2px;height:59px;background:#A8A8A8;"></div><div style="left:711px;top:815px;width:2px;height:59px;background:#A8A8A8;"></div><div style="left:921px;top:815px;width:2px;height:59px;background:#A8A8A8;"></div><div style="left:1041px;top:815px;width:2px;height:59px;background:#A8A8A8;"></div><div style="left:1281px;top:815px;width:2px;height:59px;background:#A8A8A8;"></div><div style="left:1413px;top:815px;width:2px;height:59px;background:#A8A8A8;"></div><div style="left:1556px;top:815px;width:2px;height:59px;background:#A8A8A8;"></div><div style="left:1676px;top:815px;width:2px;height:59px;background:#A8A8A8;"></div><div style="left:1796px;top:815px;width:2px;height:59px;background:#A8A8A8;"></div><div style="left:1928px;top:815px;width:2px;height:59px;background:#A8A8A8;"></div><div style="left:2048px;top:815px;width:2px;height:59px;background:#A8A8A8;"></div><div style="left:2168px;top:815px;width:2px;height:59px;background:#A8A8A8;"></div><div style="left:2286px;top:815px;width:2px;height:59px;background:#A8A8A8;"></div><div style="left:2406px;top:815px;width:2px;height:59px;background:#A8A8A8;"></div><div style="left:2556px;top:815px;width:2px;height:59px;background:#A8A8A8;"></div><div style="left:2856px;top:815px;width:2px;height:59px;background:#A8A8A8;"></div><div style="left:2px;top:817px;width:48px;height:54px;background:#FFFFFF;border:2px solid #626262;box-sizing:border-box;border-radius:1.5px;"></div><div style="top:831.32px;font-family:'Liberation Serif', serif;font-size:23.5px;line-height:23.5px;color:#F00000;white-space:pre;left:6.00px;width:40px;text-align:center;">x</div><div style="top:831.06px;font-family:'Liberation Serif', serif;font-size:25px;line-height:25px;color:#1414B8;white-space:pre;left:59.00px;transform:scaleX(0.94);transform-origin:left 50%;">00008</div><div style="top:831.06px;font-family:'Liberation Serif', serif;font-size:25px;line-height:25px;color:#1414B8;white-space:pre;left:284.00px;transform:scaleX(0.94);transform-origin:left 50%;">MẶT NẠ</div><div style="top:831.06px;font-family:'Liberation Serif', serif;font-size:25px;line-height:25px;color:#1414B8;white-space:pre;left:719.00px;transform:scaleX(0.94);transform-origin:left 50%;">SERI</div><div style="top:831.06px;font-family:'Liberation Serif', serif;font-size:25px;line-height:25px;color:#1414B8;white-space:pre;left:929.00px;transform:scaleX(0.94);transform-origin:left 50%;">HỘP</div><div style="top:831.06px;font-family:'Liberation Serif', serif;font-size:25px;line-height:25px;color:#F00000;white-space:pre;left:1206.00px;width:200px;text-align:right;transform:scaleX(0.94);transform-origin:right 50%;">200,000</div><div style="top:831.06px;font-family:'Liberation Serif', serif;font-size:25px;line-height:25px;color:#1414B8;white-space:pre;left:1349.00px;width:200px;text-align:right;transform:scaleX(0.94);transform-origin:right 50%;">400,000</div><div style="top:831.06px;font-family:'Liberation Serif', serif;font-size:25px;line-height:25px;color:#1414B8;white-space:pre;left:1470.00px;width:200px;text-align:right;transform:scaleX(0.94);transform-origin:right 50%;">395,000</div><div style="top:831.06px;font-family:'Liberation Serif', serif;font-size:25px;line-height:25px;color:#1414B8;white-space:pre;left:1589.00px;width:200px;text-align:right;transform:scaleX(0.94);transform-origin:right 50%;">0</div><div style="top:831.06px;font-family:'Liberation Serif', serif;font-size:25px;line-height:25px;color:#F00000;white-space:pre;left:1722.00px;width:200px;text-align:right;transform:scaleX(0.94);transform-origin:right 50%;">0</div><div style="top:831.06px;font-family:'Liberation Serif', serif;font-size:25px;line-height:25px;color:#1414B8;white-space:pre;left:1841.00px;width:200px;text-align:right;transform:scaleX(0.94);transform-origin:right 50%;">0</div><div style="top:831.06px;font-family:'Liberation Serif', serif;font-size:25px;line-height:25px;color:#1414B8;white-space:pre;left:1961.00px;width:200px;text-align:right;transform:scaleX(0.94);transform-origin:right 50%;">0</div><div style="top:831.06px;font-family:'Liberation Serif', serif;font-size:25px;line-height:25px;color:#1414B8;white-space:pre;left:2200.00px;width:200px;text-align:right;transform:scaleX(0.94);transform-origin:right 50%;">0</div><div style="top:831.06px;font-family:'Liberation Serif', serif;font-size:25px;line-height:25px;color:#1414B8;white-space:pre;left:2172.50px;width:110px;text-align:center;transform:scaleX(0.94);transform-origin:center 50%;">200</div><div style="top:831.06px;font-family:'Liberation Serif', serif;font-size:25px;line-height:25px;color:#1414B8;white-space:pre;left:2413.00px;width:140px;text-align:center;transform:scaleX(0.94);transform-origin:center 50%;">1</div><div style="top:831.06px;font-family:'Liberation Serif', serif;font-size:25px;line-height:25px;color:#1414B8;white-space:pre;left:2565.00px;transform:scaleX(0.94);transform-origin:left 50%;">CHĂM SÓC DA</div><div style="left:0px;top:874px;width:2864px;height:56px;background:#FFFFFF;"></div><div style="left:2858px;top:874px;width:6px;height:56px;background:#FFFFFF;"></div><div style="left:0px;top:930px;width:2864px;height:2px;background:#A8A8A8;"></div><div style="left:51px;top:874px;width:2px;height:58px;background:#A8A8A8;"></div><div style="left:276px;top:874px;width:2px;height:58px;background:#A8A8A8;"></div><div style="left:711px;top:874px;width:2px;height:58px;background:#A8A8A8;"></div><div style="left:921px;top:874px;width:2px;height:58px;background:#A8A8A8;"></div><div style="left:1041px;top:874px;width:2px;height:58px;background:#A8A8A8;"></div><div style="left:1281px;top:874px;width:2px;height:58px;background:#A8A8A8;"></div><div style="left:1413px;top:874px;width:2px;height:58px;background:#A8A8A8;"></div><div style="left:1556px;top:874px;width:2px;height:58px;background:#A8A8A8;"></div><div style="left:1676px;top:874px;width:2px;height:58px;background:#A8A8A8;"></div><div style="left:1796px;top:874px;width:2px;height:58px;background:#A8A8A8;"></div><div style="left:1928px;top:874px;width:2px;height:58px;background:#A8A8A8;"></div><div style="left:2048px;top:874px;width:2px;height:58px;background:#A8A8A8;"></div><div style="left:2168px;top:874px;width:2px;height:58px;background:#A8A8A8;"></div><div style="left:2286px;top:874px;width:2px;height:58px;background:#A8A8A8;"></div><div style="left:2406px;top:874px;width:2px;height:58px;background:#A8A8A8;"></div><div style="left:2556px;top:874px;width:2px;height:58px;background:#A8A8A8;"></div><div style="left:2856px;top:874px;width:2px;height:58px;background:#A8A8A8;"></div><div style="left:2px;top:876px;width:48px;height:53px;background:#FFFFFF;border:2px solid #626262;box-sizing:border-box;border-radius:1.5px;"></div><div style="top:890.32px;font-family:'Liberation Serif', serif;font-size:23.5px;line-height:23.5px;color:#F00000;white-space:pre;left:6.00px;width:40px;text-align:center;">x</div><div style="top:890.06px;font-family:'Liberation Serif', serif;font-size:25px;line-height:25px;color:#1414B8;white-space:pre;left:59.00px;transform:scaleX(0.94);transform-origin:left 50%;">00007</div><div style="top:890.06px;font-family:'Liberation Serif', serif;font-size:25px;line-height:25px;color:#1414B8;white-space:pre;left:284.00px;transform:scaleX(0.94);transform-origin:left 50%;">SỮA RỬA MẶT</div><div style="top:890.06px;font-family:'Liberation Serif', serif;font-size:25px;line-height:25px;color:#1414B8;white-space:pre;left:719.00px;transform:scaleX(0.94);transform-origin:left 50%;">SERI</div><div style="top:890.06px;font-family:'Liberation Serif', serif;font-size:25px;line-height:25px;color:#1414B8;white-space:pre;left:929.00px;transform:scaleX(0.94);transform-origin:left 50%;">CHAI</div><div style="top:890.06px;font-family:'Liberation Serif', serif;font-size:25px;line-height:25px;color:#F00000;white-space:pre;left:1206.00px;width:200px;text-align:right;transform:scaleX(0.94);transform-origin:right 50%;">320,000</div><div style="top:890.06px;font-family:'Liberation Serif', serif;font-size:25px;line-height:25px;color:#1414B8;white-space:pre;left:1349.00px;width:200px;text-align:right;transform:scaleX(0.94);transform-origin:right 50%;">440,000</div><div style="top:890.06px;font-family:'Liberation Serif', serif;font-size:25px;line-height:25px;color:#1414B8;white-space:pre;left:1470.00px;width:200px;text-align:right;transform:scaleX(0.94);transform-origin:right 50%;">430,000</div><div style="top:890.06px;font-family:'Liberation Serif', serif;font-size:25px;line-height:25px;color:#1414B8;white-space:pre;left:1589.00px;width:200px;text-align:right;transform:scaleX(0.94);transform-origin:right 50%;">0</div><div style="top:890.06px;font-family:'Liberation Serif', serif;font-size:25px;line-height:25px;color:#F00000;white-space:pre;left:1722.00px;width:200px;text-align:right;transform:scaleX(0.94);transform-origin:right 50%;">0</div><div style="top:890.06px;font-family:'Liberation Serif', serif;font-size:25px;line-height:25px;color:#1414B8;white-space:pre;left:1841.00px;width:200px;text-align:right;transform:scaleX(0.94);transform-origin:right 50%;">0</div><div style="top:890.06px;font-family:'Liberation Serif', serif;font-size:25px;line-height:25px;color:#1414B8;white-space:pre;left:1961.00px;width:200px;text-align:right;transform:scaleX(0.94);transform-origin:right 50%;">0</div><div style="top:890.06px;font-family:'Liberation Serif', serif;font-size:25px;line-height:25px;color:#1414B8;white-space:pre;left:2200.00px;width:200px;text-align:right;transform:scaleX(0.94);transform-origin:right 50%;">0</div><div style="top:890.06px;font-family:'Liberation Serif', serif;font-size:25px;line-height:25px;color:#1414B8;white-space:pre;left:2172.50px;width:110px;text-align:center;transform:scaleX(0.94);transform-origin:center 50%;">200</div><div style="top:890.06px;font-family:'Liberation Serif', serif;font-size:25px;line-height:25px;color:#1414B8;white-space:pre;left:2413.00px;width:140px;text-align:center;transform:scaleX(0.94);transform-origin:center 50%;">1</div><div style="top:890.06px;font-family:'Liberation Serif', serif;font-size:25px;line-height:25px;color:#1414B8;white-space:pre;left:2565.00px;transform:scaleX(0.94);transform-origin:left 50%;">CHĂM SÓC DA</div><div style="left:0px;top:932px;width:2864px;height:57px;background:#FFFFFF;"></div><div style="left:2858px;top:932px;width:6px;height:57px;background:#FFFFFF;"></div><div style="left:0px;top:989px;width:2864px;height:2px;background:#A8A8A8;"></div><div style="left:51px;top:932px;width:2px;height:59px;background:#A8A8A8;"></div><div style="left:276px;top:932px;width:2px;height:59px;background:#A8A8A8;"></div><div style="left:711px;top:932px;width:2px;height:59px;background:#A8A8A8;"></div><div style="left:921px;top:932px;width:2px;height:59px;background:#A8A8A8;"></div><div style="left:1041px;top:932px;width:2px;height:59px;background:#A8A8A8;"></div><div style="left:1281px;top:932px;width:2px;height:59px;background:#A8A8A8;"></div><div style="left:1413px;top:932px;width:2px;height:59px;background:#A8A8A8;"></div><div style="left:1556px;top:932px;width:2px;height:59px;background:#A8A8A8;"></div><div style="left:1676px;top:932px;width:2px;height:59px;background:#A8A8A8;"></div><div style="left:1796px;top:932px;width:2px;height:59px;background:#A8A8A8;"></div><div style="left:1928px;top:932px;width:2px;height:59px;background:#A8A8A8;"></div><div style="left:2048px;top:932px;width:2px;height:59px;background:#A8A8A8;"></div><div style="left:2168px;top:932px;width:2px;height:59px;background:#A8A8A8;"></div><div style="left:2286px;top:932px;width:2px;height:59px;background:#A8A8A8;"></div><div style="left:2406px;top:932px;width:2px;height:59px;background:#A8A8A8;"></div><div style="left:2556px;top:932px;width:2px;height:59px;background:#A8A8A8;"></div><div style="left:2856px;top:932px;width:2px;height:59px;background:#A8A8A8;"></div><div style="left:2px;top:934px;width:48px;height:54px;background:#FFFFFF;border:2px solid #626262;box-sizing:border-box;border-radius:1.5px;"></div><div style="top:948.32px;font-family:'Liberation Serif', serif;font-size:23.5px;line-height:23.5px;color:#F00000;white-space:pre;left:6.00px;width:40px;text-align:center;">x</div><div style="top:948.06px;font-family:'Liberation Serif', serif;font-size:25px;line-height:25px;color:#1414B8;white-space:pre;left:59.00px;transform:scaleX(0.94);transform-origin:left 50%;">00006</div><div style="top:948.06px;font-family:'Liberation Serif', serif;font-size:25px;line-height:25px;color:#1414B8;white-space:pre;left:284.00px;transform:scaleX(0.94);transform-origin:left 50%;">TẨY DA CHẾT</div><div style="top:948.06px;font-family:'Liberation Serif', serif;font-size:25px;line-height:25px;color:#1414B8;white-space:pre;left:719.00px;transform:scaleX(0.94);transform-origin:left 50%;">SERI</div><div style="top:948.06px;font-family:'Liberation Serif', serif;font-size:25px;line-height:25px;color:#1414B8;white-space:pre;left:929.00px;transform:scaleX(0.94);transform-origin:left 50%;">CHAI</div><div style="top:948.06px;font-family:'Liberation Serif', serif;font-size:25px;line-height:25px;color:#F00000;white-space:pre;left:1206.00px;width:200px;text-align:right;transform:scaleX(0.94);transform-origin:right 50%;">120,000</div><div style="top:948.06px;font-family:'Liberation Serif', serif;font-size:25px;line-height:25px;color:#1414B8;white-space:pre;left:1349.00px;width:200px;text-align:right;transform:scaleX(0.94);transform-origin:right 50%;">340,000</div><div style="top:948.06px;font-family:'Liberation Serif', serif;font-size:25px;line-height:25px;color:#1414B8;white-space:pre;left:1470.00px;width:200px;text-align:right;transform:scaleX(0.94);transform-origin:right 50%;">330,000</div><div style="top:948.06px;font-family:'Liberation Serif', serif;font-size:25px;line-height:25px;color:#1414B8;white-space:pre;left:1589.00px;width:200px;text-align:right;transform:scaleX(0.94);transform-origin:right 50%;">0</div><div style="top:948.06px;font-family:'Liberation Serif', serif;font-size:25px;line-height:25px;color:#F00000;white-space:pre;left:1722.00px;width:200px;text-align:right;transform:scaleX(0.94);transform-origin:right 50%;">0</div><div style="top:948.06px;font-family:'Liberation Serif', serif;font-size:25px;line-height:25px;color:#1414B8;white-space:pre;left:1841.00px;width:200px;text-align:right;transform:scaleX(0.94);transform-origin:right 50%;">0</div><div style="top:948.06px;font-family:'Liberation Serif', serif;font-size:25px;line-height:25px;color:#1414B8;white-space:pre;left:1961.00px;width:200px;text-align:right;transform:scaleX(0.94);transform-origin:right 50%;">0</div><div style="top:948.06px;font-family:'Liberation Serif', serif;font-size:25px;line-height:25px;color:#1414B8;white-space:pre;left:2200.00px;width:200px;text-align:right;transform:scaleX(0.94);transform-origin:right 50%;">0</div><div style="top:948.06px;font-family:'Liberation Serif', serif;font-size:25px;line-height:25px;color:#1414B8;white-space:pre;left:2172.50px;width:110px;text-align:center;transform:scaleX(0.94);transform-origin:center 50%;">320</div><div style="top:948.06px;font-family:'Liberation Serif', serif;font-size:25px;line-height:25px;color:#1414B8;white-space:pre;left:2413.00px;width:140px;text-align:center;transform:scaleX(0.94);transform-origin:center 50%;">1</div><div style="top:948.06px;font-family:'Liberation Serif', serif;font-size:25px;line-height:25px;color:#1414B8;white-space:pre;left:2565.00px;transform:scaleX(0.94);transform-origin:left 50%;">CHĂM SÓC DA</div><div style="left:0px;top:991px;width:2864px;height:57px;background:#FFFFFF;"></div><div style="left:2858px;top:991px;width:6px;height:57px;background:#FFFFFF;"></div><div style="left:0px;top:1048px;width:2864px;height:2px;background:#A8A8A8;"></div><div style="left:51px;top:991px;width:2px;height:59px;background:#A8A8A8;"></div><div style="left:276px;top:991px;width:2px;height:59px;background:#A8A8A8;"></div><div style="left:711px;top:991px;width:2px;height:59px;background:#A8A8A8;"></div><div style="left:921px;top:991px;width:2px;height:59px;background:#A8A8A8;"></div><div style="left:1041px;top:991px;width:2px;height:59px;background:#A8A8A8;"></div><div style="left:1281px;top:991px;width:2px;height:59px;background:#A8A8A8;"></div><div style="left:1413px;top:991px;width:2px;height:59px;background:#A8A8A8;"></div><div style="left:1556px;top:991px;width:2px;height:59px;background:#A8A8A8;"></div><div style="left:1676px;top:991px;width:2px;height:59px;background:#A8A8A8;"></div><div style="left:1796px;top:991px;width:2px;height:59px;background:#A8A8A8;"></div><div style="left:1928px;top:991px;width:2px;height:59px;background:#A8A8A8;"></div><div style="left:2048px;top:991px;width:2px;height:59px;background:#A8A8A8;"></div><div style="left:2168px;top:991px;width:2px;height:59px;background:#A8A8A8;"></div><div style="left:2286px;top:991px;width:2px;height:59px;background:#A8A8A8;"></div><div style="left:2406px;top:991px;width:2px;height:59px;background:#A8A8A8;"></div><div style="left:2556px;top:991px;width:2px;height:59px;background:#A8A8A8;"></div><div style="left:2856px;top:991px;width:2px;height:59px;background:#A8A8A8;"></div><div style="left:2px;top:993px;width:48px;height:54px;background:#FFFFFF;border:2px solid #626262;box-sizing:border-box;border-radius:1.5px;"></div><div style="top:1007.32px;font-family:'Liberation Serif', serif;font-size:23.5px;line-height:23.5px;color:#F00000;white-space:pre;left:6.00px;width:40px;text-align:center;">x</div><div style="top:1007.06px;font-family:'Liberation Serif', serif;font-size:25px;line-height:25px;color:#1414B8;white-space:pre;left:59.00px;transform:scaleX(0.94);transform-origin:left 50%;">00001</div><div style="top:1007.06px;font-family:'Liberation Serif', serif;font-size:25px;line-height:25px;color:#1414B8;white-space:pre;left:284.00px;transform:scaleX(0.94);transform-origin:left 50%;">TẨY DA CHẾT DA ĐẦU</div><div style="top:1007.06px;font-family:'Liberation Serif', serif;font-size:25px;line-height:25px;color:#1414B8;white-space:pre;left:719.00px;transform:scaleX(0.94);transform-origin:left 50%;">SERI</div><div style="top:1007.06px;font-family:'Liberation Serif', serif;font-size:25px;line-height:25px;color:#1414B8;white-space:pre;left:929.00px;transform:scaleX(0.94);transform-origin:left 50%;">CHAI</div><div style="top:1007.06px;font-family:'Liberation Serif', serif;font-size:25px;line-height:25px;color:#F00000;white-space:pre;left:1206.00px;width:200px;text-align:right;transform:scaleX(0.94);transform-origin:right 50%;">220,000</div><div style="top:1007.06px;font-family:'Liberation Serif', serif;font-size:25px;line-height:25px;color:#1414B8;white-space:pre;left:1349.00px;width:200px;text-align:right;transform:scaleX(0.94);transform-origin:right 50%;">450,000</div><div style="top:1007.06px;font-family:'Liberation Serif', serif;font-size:25px;line-height:25px;color:#1414B8;white-space:pre;left:1470.00px;width:200px;text-align:right;transform:scaleX(0.94);transform-origin:right 50%;">440,000</div><div style="top:1007.06px;font-family:'Liberation Serif', serif;font-size:25px;line-height:25px;color:#1414B8;white-space:pre;left:1589.00px;width:200px;text-align:right;transform:scaleX(0.94);transform-origin:right 50%;">0</div><div style="top:1007.06px;font-family:'Liberation Serif', serif;font-size:25px;line-height:25px;color:#F00000;white-space:pre;left:1722.00px;width:200px;text-align:right;transform:scaleX(0.94);transform-origin:right 50%;">0</div><div style="top:1007.06px;font-family:'Liberation Serif', serif;font-size:25px;line-height:25px;color:#1414B8;white-space:pre;left:1841.00px;width:200px;text-align:right;transform:scaleX(0.94);transform-origin:right 50%;">0</div><div style="top:1007.06px;font-family:'Liberation Serif', serif;font-size:25px;line-height:25px;color:#1414B8;white-space:pre;left:1961.00px;width:200px;text-align:right;transform:scaleX(0.94);transform-origin:right 50%;">0</div><div style="top:1007.06px;font-family:'Liberation Serif', serif;font-size:25px;line-height:25px;color:#1414B8;white-space:pre;left:2200.00px;width:200px;text-align:right;transform:scaleX(0.94);transform-origin:right 50%;">0</div><div style="top:1007.06px;font-family:'Liberation Serif', serif;font-size:25px;line-height:25px;color:#1414B8;white-space:pre;left:2172.50px;width:110px;text-align:center;transform:scaleX(0.94);transform-origin:center 50%;">1000</div><div style="top:1007.06px;font-family:'Liberation Serif', serif;font-size:25px;line-height:25px;color:#1414B8;white-space:pre;left:2413.00px;width:140px;text-align:center;transform:scaleX(0.94);transform-origin:center 50%;">1</div><div style="top:1007.06px;font-family:'Liberation Serif', serif;font-size:25px;line-height:25px;color:#1414B8;white-space:pre;left:2565.00px;transform:scaleX(0.94);transform-origin:left 50%;">CHĂM SÓC TÓC</div><div style="left:0px;top:1050px;width:2864px;height:56px;background:#FFFFFF;"></div><div style="left:2858px;top:1050px;width:6px;height:56px;background:#FFFFFF;"></div><div style="left:0px;top:1106px;width:2864px;height:2px;background:#A8A8A8;"></div><div style="left:51px;top:1050px;width:2px;height:58px;background:#A8A8A8;"></div><div style="left:276px;top:1050px;width:2px;height:58px;background:#A8A8A8;"></div><div style="left:711px;top:1050px;width:2px;height:58px;background:#A8A8A8;"></div><div style="left:921px;top:1050px;width:2px;height:58px;background:#A8A8A8;"></div><div style="left:1041px;top:1050px;width:2px;height:58px;background:#A8A8A8;"></div><div style="left:1281px;top:1050px;width:2px;height:58px;background:#A8A8A8;"></div><div style="left:1413px;top:1050px;width:2px;height:58px;background:#A8A8A8;"></div><div style="left:1556px;top:1050px;width:2px;height:58px;background:#A8A8A8;"></div><div style="left:1676px;top:1050px;width:2px;height:58px;background:#A8A8A8;"></div><div style="left:1796px;top:1050px;width:2px;height:58px;background:#A8A8A8;"></div><div style="left:1928px;top:1050px;width:2px;height:58px;background:#A8A8A8;"></div><div style="left:2048px;top:1050px;width:2px;height:58px;background:#A8A8A8;"></div><div style="left:2168px;top:1050px;width:2px;height:58px;background:#A8A8A8;"></div><div style="left:2286px;top:1050px;width:2px;height:58px;background:#A8A8A8;"></div><div style="left:2406px;top:1050px;width:2px;height:58px;background:#A8A8A8;"></div><div style="left:2556px;top:1050px;width:2px;height:58px;background:#A8A8A8;"></div><div style="left:2856px;top:1050px;width:2px;height:58px;background:#A8A8A8;"></div><div style="left:2px;top:1052px;width:48px;height:53px;background:#FFFFFF;border:2px solid #626262;box-sizing:border-box;border-radius:1.5px;"></div><div style="top:1066.32px;font-family:'Liberation Serif', serif;font-size:23.5px;line-height:23.5px;color:#F00000;white-space:pre;left:6.00px;width:40px;text-align:center;">x</div><div style="top:1066.06px;font-family:'Liberation Serif', serif;font-size:25px;line-height:25px;color:#1414B8;white-space:pre;left:59.00px;transform:scaleX(0.94);transform-origin:left 50%;">00005</div><div style="top:1066.06px;font-family:'Liberation Serif', serif;font-size:25px;line-height:25px;color:#1414B8;white-space:pre;left:284.00px;transform:scaleX(0.94);transform-origin:left 50%;">TẨY TRANG</div><div style="top:1066.06px;font-family:'Liberation Serif', serif;font-size:25px;line-height:25px;color:#1414B8;white-space:pre;left:719.00px;transform:scaleX(0.94);transform-origin:left 50%;">SERI</div><div style="top:1066.06px;font-family:'Liberation Serif', serif;font-size:25px;line-height:25px;color:#1414B8;white-space:pre;left:929.00px;transform:scaleX(0.94);transform-origin:left 50%;">CHAI</div><div style="top:1066.06px;font-family:'Liberation Serif', serif;font-size:25px;line-height:25px;color:#F00000;white-space:pre;left:1206.00px;width:200px;text-align:right;transform:scaleX(0.94);transform-origin:right 50%;">475,000</div><div style="top:1066.06px;font-family:'Liberation Serif', serif;font-size:25px;line-height:25px;color:#1414B8;white-space:pre;left:1349.00px;width:200px;text-align:right;transform:scaleX(0.94);transform-origin:right 50%;">850,000</div><div style="top:1066.06px;font-family:'Liberation Serif', serif;font-size:25px;line-height:25px;color:#1414B8;white-space:pre;left:1470.00px;width:200px;text-align:right;transform:scaleX(0.94);transform-origin:right 50%;">840,000</div><div style="top:1066.06px;font-family:'Liberation Serif', serif;font-size:25px;line-height:25px;color:#1414B8;white-space:pre;left:1589.00px;width:200px;text-align:right;transform:scaleX(0.94);transform-origin:right 50%;">0</div><div style="top:1066.06px;font-family:'Liberation Serif', serif;font-size:25px;line-height:25px;color:#F00000;white-space:pre;left:1722.00px;width:200px;text-align:right;transform:scaleX(0.94);transform-origin:right 50%;">0</div><div style="top:1066.06px;font-family:'Liberation Serif', serif;font-size:25px;line-height:25px;color:#1414B8;white-space:pre;left:1841.00px;width:200px;text-align:right;transform:scaleX(0.94);transform-origin:right 50%;">0</div><div style="top:1066.06px;font-family:'Liberation Serif', serif;font-size:25px;line-height:25px;color:#1414B8;white-space:pre;left:1961.00px;width:200px;text-align:right;transform:scaleX(0.94);transform-origin:right 50%;">0</div><div style="top:1066.06px;font-family:'Liberation Serif', serif;font-size:25px;line-height:25px;color:#1414B8;white-space:pre;left:2200.00px;width:200px;text-align:right;transform:scaleX(0.94);transform-origin:right 50%;">0</div><div style="top:1066.06px;font-family:'Liberation Serif', serif;font-size:25px;line-height:25px;color:#1414B8;white-space:pre;left:2172.50px;width:110px;text-align:center;transform:scaleX(0.94);transform-origin:center 50%;">250</div><div style="top:1066.06px;font-family:'Liberation Serif', serif;font-size:25px;line-height:25px;color:#1414B8;white-space:pre;left:2413.00px;width:140px;text-align:center;transform:scaleX(0.94);transform-origin:center 50%;">1</div><div style="top:1066.06px;font-family:'Liberation Serif', serif;font-size:25px;line-height:25px;color:#1414B8;white-space:pre;left:2565.00px;transform:scaleX(0.94);transform-origin:left 50%;">CHĂM SÓC DA</div><div style="left:0px;top:1697px;width:2864px;height:1px;background:#FFFFFF;"></div><div style="left:0px;top:1698px;width:2864px;height:24px;background:#F0F0F0;"></div><div style="left:24px;top:1699px;width:2471px;height:22px;background:#CDCDCD;"></div><svg style="left:4px;top:1702px" width="14" height="16" viewBox="0 0 14 16"><path d="M10.5 2.5 L4.5 8 L10.5 13.5" fill="none" stroke="#606060" stroke-width="2.6"/></svg><svg style="left:2843px;top:1702px" width="14" height="16" viewBox="0 0 14 16"><path d="M3.5 2.5 L9.5 8 L3.5 13.5" fill="none" stroke="#606060" stroke-width="2.6"/></svg><div style="top:1593.21px;font-family:'Liberation Sans', sans-serif;font-size:29.6px;line-height:29.6px;color:#BDBDBD;white-space:pre;left:2406.50px;letter-spacing:0.13px;">Activate Windows</div><div style="top:1631.91px;font-family:'Liberation Sans', sans-serif;font-size:21.6px;line-height:21.6px;color:#BDBDBD;white-space:pre;left:2406.50px;letter-spacing:0.09px;">Go to Settings to activate Windows.</div><div style="left:484px;top:64px;width:1919px;height:477px;background:#E6E6F4;"></div><div style="left:484px;top:64px;width:1919px;height:1px;background:#DCDCEA;"></div><div style="left:484px;top:64px;width:1px;height:477px;background:#F2F2FA;"></div><div style="left:2402px;top:64px;width:1px;height:477px;background:#F2F2FA;"></div><div style="left:500px;top:68px;width:20px;height:20px;background:#fff;border:2px solid #48484C;box-sizing:border-box;"></div><div style="top:63.39px;font-family:'Liberation Serif', serif;font-size:27px;line-height:27px;color:#000;white-space:pre;left:530.00px;">Sửa trên lưới</div><div style="left:686px;top:68px;width:20px;height:20px;background:#fff;border:2px solid #48484C;box-sizing:border-box;"></div><svg style="left:686px;top:68px" width="20" height="20" viewBox="0 0 20 20"><path d="M4.3 9.6 L8.2 13.6 L15.6 6.2" fill="none" stroke="#4A4A4A" stroke-width="2.1"/></svg><div style="top:63.89px;font-family:'Liberation Serif', serif;font-size:27px;line-height:27px;color:#000;white-space:pre;left:715.50px;">Mã tự động</div><div style="left:865px;top:68px;width:20px;height:20px;background:#fff;border:2px solid #48484C;box-sizing:border-box;"></div><div style="top:63.39px;font-family:'Liberation Serif', serif;font-size:27px;line-height:27px;color:#000;white-space:pre;left:894.50px;">Chữ in hoa</div><div style="left:1028px;top:68px;width:20px;height:20px;background:#fff;border:2px solid #48484C;box-sizing:border-box;"></div><div style="top:63.39px;font-family:'Liberation Serif', serif;font-size:27px;line-height:27px;color:#000;white-space:pre;left:1057.50px;letter-spacing:0.2px;">Báo báo Date</div><div style="left:488px;top:109px;width:765px;height:85px;background:#FFFFFF;"></div><div style="left:488px;top:194px;width:628px;height:126px;background:#FFFFFF;"></div><div style="left:837px;top:194px;width:277px;height:40px;background:#E6E6F4;"></div><div style="left:488px;top:109px;width:765px;height:2px;background:#D6D6D6;"></div><div style="left:488px;top:150px;width:765px;height:2px;background:#D6D6D6;"></div><div style="left:488px;top:192px;width:765px;height:2px;background:#D6D6D6;"></div><div style="left:488px;top:234px;width:628px;height:2px;background:#D6D6D6;"></div><div style="left:488px;top:276px;width:628px;height:2px;background:#D6D6D6;"></div><div style="left:488px;top:318px;width:628px;height:2px;background:#D6D6D6;"></div><div style="left:1114px;top:234px;width:139px;height:2px;background:#D6D6D6;"></div><div style="left:488px;top:109px;width:2px;height:211px;background:#D6D6D6;"></div><div style="left:602px;top:109px;width:2px;height:211px;background:#D6D6D6;"></div><div style="left:719px;top:192px;width:2px;height:128px;background:#D6D6D6;"></div><div style="left:835px;top:192px;width:2px;height:128px;background:#D6D6D6;"></div><div style="left:907px;top:109px;width:2px;height:43px;background:#D6D6D6;"></div><div style="left:1251px;top:109px;width:2px;height:43px;background:#D6D6D6;"></div><div style="left:1114px;top:236px;width:2px;height:84px;background:#D6D6D6;"></div><div style="left:602px;top:150px;width:2px;height:44px;background:#7A7A7A;"></div><div style="left:602px;top:192px;width:651px;height:2px;background:#7A7A7A;"></div><div style="left:1251px;top:151px;width:2px;height:85px;background:#6A6A6A;"></div><div style="left:1114px;top:194px;width:139px;height:40px;background:#FFFFFF;"></div><div style="left:1114px;top:192px;width:2px;height:44px;background:#6A6A6A;"></div><div style="left:1114px;top:234px;width:139px;height:2px;background:#6A6A6A;"></div><div style="top:114.39px;font-family:'Liberation Serif', serif;font-size:27px;line-height:27px;color:#6A6A6A;white-space:pre;left:492.00px;">Mã hàng:</div><div style="top:114.39px;font-family:'Liberation Serif', serif;font-size:27px;line-height:27px;color:#6A6A6A;white-space:pre;left:606.50px;">00010</div><div style="top:114.39px;font-family:'Liberation Serif', serif;font-size:27px;line-height:27px;color:#6A6A6A;white-space:pre;left:911.50px;letter-spacing:0.5px;">CHĂM SÓC DA</div><div style="top:156.39px;font-family:'Liberation Serif', serif;font-size:27px;line-height:27px;color:#6A6A6A;white-space:pre;left:492.50px;">Tên hàng:</div><div style="top:198.89px;font-family:'Liberation Serif', serif;font-size:27px;line-height:27px;color:#6A6A6A;white-space:pre;left:492.00px;">Đvt 1:</div><div style="top:198.89px;font-family:'Liberation Serif', serif;font-size:27px;line-height:27px;color:#6A6A6A;white-space:pre;left:606.00px;">HŨ</div><div style="top:198.89px;font-family:'Liberation Serif', serif;font-size:27px;line-height:27px;color:#6A6A6A;white-space:pre;left:720.00px;width:114px;text-align:center;letter-spacing:0.65px;">Quy đổi</div><div style="top:197.39px;font-family:'Liberation Serif', serif;font-size:27px;line-height:27px;color:#6A6A6A;white-space:pre;left:1113.50px;width:136px;text-align:center;letter-spacing:0.7px;">SL tồn</div><div style="top:240.69px;font-family:'Liberation Serif', serif;font-size:27px;line-height:27px;color:#6A6A6A;white-space:pre;left:492.00px;">Đvt 2:</div><div style="top:240.69px;font-family:'Liberation Serif', serif;font-size:27px;line-height:27px;color:#6A6A6A;white-space:pre;left:606.00px;">HŨ</div><div style="top:240.69px;font-family:'Liberation Serif', serif;font-size:27px;line-height:27px;color:#6A6A6A;white-space:pre;left:721.00px;width:114px;text-align:center;">1</div><div style="top:240.69px;font-family:'Liberation Serif', serif;font-size:27px;line-height:27px;color:#6A6A6A;white-space:pre;left:838.50px;letter-spacing:0.5px;">Mã vạch</div><div style="top:282.49px;font-family:'Liberation Serif', serif;font-size:27px;line-height:27px;color:#6A6A6A;white-space:pre;left:492.00px;">Đvt 3:</div><div style="top:282.49px;font-family:'Liberation Serif', serif;font-size:27px;line-height:27px;color:#6A6A6A;white-space:pre;left:606.00px;">HŨ</div><div style="top:282.49px;font-family:'Liberation Serif', serif;font-size:27px;line-height:27px;color:#6A6A6A;white-space:pre;left:721.00px;width:114px;text-align:center;">1</div><div style="top:282.49px;font-family:'Liberation Serif', serif;font-size:27px;line-height:27px;color:#6A6A6A;white-space:pre;left:838.50px;letter-spacing:0.5px;">Mã vạch</div><div style="left:1255px;top:61px;width:158px;height:83px;background:#DCE6F2;border:1.6px solid #8A8A8A;box-sizing:border-box;"></div><div style="top:87.89px;font-family:'Liberation Serif', serif;font-size:27px;line-height:27px;color:#000;white-space:pre;left:1233.00px;width:198px;text-align:center;letter-spacing:0.5px;">Nhóm hàng</div><div style="left:1420px;top:61px;width:180px;height:83px;background:#DCE6F2;border:3px solid #6E6E6E;box-sizing:border-box;"></div><div style="top:87.89px;font-family:'Liberation Serif', serif;font-size:27px;line-height:27px;color:#000;white-space:pre;left:1398.00px;width:220px;text-align:center;letter-spacing:0.5px;">Tạo mới</div><div style="left:1607px;top:61px;width:189px;height:83px;background:#DCE6F2;border:1.6px solid #8A8A8A;box-sizing:border-box;"></div><div style="top:87.89px;font-family:'Liberation Serif', serif;font-size:27px;line-height:27px;color:#000;white-space:pre;left:1585.00px;width:229px;text-align:center;letter-spacing:0.5px;">Copy</div><div style="left:1804px;top:61px;width:189px;height:83px;background:#DCE6F2;border:1.6px solid #8A8A8A;box-sizing:border-box;"></div><div style="top:87.89px;font-family:'Liberation Serif', serif;font-size:27px;line-height:27px;color:#000;white-space:pre;left:1782.00px;width:229px;text-align:center;letter-spacing:0.5px;">Sửa</div><div style="left:2000px;top:61px;width:119px;height:83px;background:#DCE6F2;border:1.6px solid #8A8A8A;box-sizing:border-box;"></div><div style="top:87.89px;font-family:'Liberation Serif', serif;font-size:27px;line-height:27px;color:#000;white-space:pre;left:1978.00px;width:159px;text-align:center;letter-spacing:0.5px;">In tem</div><div style="left:1255px;top:151px;width:390px;height:168px;background:#FFFFFF;"></div><div style="left:1255px;top:151px;width:390px;height:2px;background:#6E6E6E;"></div><div style="left:1255px;top:151px;width:2px;height:42px;background:#6E6E6E;"></div><div style="left:1643px;top:151px;width:2px;height:42px;background:#6E6E6E;"></div><div style="left:1255px;top:192px;width:390px;height:2px;background:#D6D6D6;"></div><div style="left:1255px;top:234px;width:390px;height:2px;background:#D6D6D6;"></div><div style="left:1255px;top:276px;width:390px;height:2px;background:#D6D6D6;"></div><div style="left:1255px;top:318px;width:390px;height:2px;background:#D6D6D6;"></div><div style="left:1255px;top:193px;width:2px;height:127px;background:#D6D6D6;"></div><div style="left:1643px;top:193px;width:2px;height:127px;background:#D6D6D6;"></div><div style="left:1412px;top:151px;width:2px;height:42px;background:#6E6E6E;"></div><div style="left:1412px;top:193px;width:2px;height:127px;background:#D6D6D6;"></div><div style="top:154.89px;font-family:'Liberation Serif', serif;font-size:27px;line-height:27px;color:#6A6A6A;white-space:pre;left:1259.50px;width:150px;text-align:center;">Giá vốn</div><div style="top:154.89px;font-family:'Liberation Serif', serif;font-size:27px;line-height:27px;color:#6A6A6A;white-space:pre;left:1418.50px;width:220px;text-align:center;">Giá lẻ</div><div style="left:1651px;top:151px;width:232px;height:168px;background:#FFFFFF;"></div><div style="left:1651px;top:151px;width:232px;height:2px;background:#6E6E6E;"></div><div style="left:1651px;top:151px;width:2px;height:42px;background:#6E6E6E;"></div><div style="left:1881px;top:151px;width:2px;height:42px;background:#6E6E6E;"></div><div style="left:1651px;top:192px;width:232px;height:2px;background:#D6D6D6;"></div><div style="left:1651px;top:234px;width:232px;height:2px;background:#D6D6D6;"></div><div style="left:1651px;top:276px;width:232px;height:2px;background:#D6D6D6;"></div><div style="left:1651px;top:318px;width:232px;height:2px;background:#D6D6D6;"></div><div style="left:1651px;top:193px;width:2px;height:127px;background:#D6D6D6;"></div><div style="left:1881px;top:193px;width:2px;height:127px;background:#D6D6D6;"></div><div style="top:154.89px;font-family:'Liberation Serif', serif;font-size:27px;line-height:27px;color:#6A6A6A;white-space:pre;left:1657.00px;width:220px;text-align:center;">Giá sỉ</div><div style="left:1890px;top:151px;width:232px;height:168px;background:#FFFFFF;"></div><div style="left:1890px;top:151px;width:232px;height:2px;background:#6E6E6E;"></div><div style="left:1890px;top:151px;width:2px;height:42px;background:#6E6E6E;"></div><div style="left:2120px;top:151px;width:2px;height:42px;background:#6E6E6E;"></div><div style="left:1890px;top:192px;width:232px;height:2px;background:#D6D6D6;"></div><div style="left:1890px;top:234px;width:232px;height:2px;background:#D6D6D6;"></div><div style="left:1890px;top:276px;width:232px;height:2px;background:#D6D6D6;"></div><div style="left:1890px;top:318px;width:232px;height:2px;background:#D6D6D6;"></div><div style="left:1890px;top:193px;width:2px;height:127px;background:#D6D6D6;"></div><div style="left:2120px;top:193px;width:2px;height:127px;background:#D6D6D6;"></div><div style="top:154.89px;font-family:'Liberation Serif', serif;font-size:27px;line-height:27px;color:#6A6A6A;white-space:pre;left:1896.00px;width:220px;text-align:center;">Giá vip</div><div style="top:199.39px;font-family:'Liberation Serif', serif;font-size:27px;line-height:27px;color:#6A6A6A;white-space:pre;left:1284.00px;width:100px;text-align:center;">0</div><div style="top:199.39px;font-family:'Liberation Serif', serif;font-size:27px;line-height:27px;color:#6A6A6A;white-space:pre;left:1540.00px;width:100px;text-align:right;">0</div><div style="top:199.39px;font-family:'Liberation Serif', serif;font-size:27px;line-height:27px;color:#6A6A6A;white-space:pre;left:1779.00px;width:100px;text-align:right;">0</div><div style="top:199.39px;font-family:'Liberation Serif', serif;font-size:27px;line-height:27px;color:#6A6A6A;white-space:pre;left:2018.00px;width:100px;text-align:right;">0</div><div style="top:241.19px;font-family:'Liberation Serif', serif;font-size:27px;line-height:27px;color:#6A6A6A;white-space:pre;left:1284.00px;width:100px;text-align:center;">0</div><div style="top:241.19px;font-family:'Liberation Serif', serif;font-size:27px;line-height:27px;color:#6A6A6A;white-space:pre;left:1540.00px;width:100px;text-align:right;">0</div><div style="top:241.19px;font-family:'Liberation Serif', serif;font-size:27px;line-height:27px;color:#6A6A6A;white-space:pre;left:1779.00px;width:100px;text-align:right;">0</div><div style="top:241.19px;font-family:'Liberation Serif', serif;font-size:27px;line-height:27px;color:#6A6A6A;white-space:pre;left:2018.00px;width:100px;text-align:right;">0</div><div style="top:282.99px;font-family:'Liberation Serif', serif;font-size:27px;line-height:27px;color:#6A6A6A;white-space:pre;left:1284.00px;width:100px;text-align:center;">0</div><div style="top:282.99px;font-family:'Liberation Serif', serif;font-size:27px;line-height:27px;color:#6A6A6A;white-space:pre;left:1540.00px;width:100px;text-align:right;">0</div><div style="top:282.99px;font-family:'Liberation Serif', serif;font-size:27px;line-height:27px;color:#6A6A6A;white-space:pre;left:1779.00px;width:100px;text-align:right;">0</div><div style="top:282.99px;font-family:'Liberation Serif', serif;font-size:27px;line-height:27px;color:#6A6A6A;white-space:pre;left:2018.00px;width:100px;text-align:right;">0</div><div style="left:1891px;top:319px;width:230px;height:83px;background:#FFFFFF;"></div><div style="left:1891px;top:359px;width:230px;height:2px;background:#D6D6D6;"></div><div style="left:1891px;top:400px;width:230px;height:2px;background:#D6D6D6;"></div><div style="left:1891px;top:319px;width:2px;height:83px;background:#D6D6D6;"></div><div style="left:2119px;top:319px;width:2px;height:83px;background:#D6D6D6;"></div><div style="left:2018px;top:319px;width:2px;height:83px;background:#D6D6D6;"></div><div style="top:324.39px;font-family:'Liberation Serif', serif;font-size:27px;line-height:27px;color:#6A6A6A;white-space:pre;left:1895.00px;letter-spacing:0.4px;">Hoa hồng:</div><div style="top:324.39px;font-family:'Liberation Serif', serif;font-size:27px;line-height:27px;color:#6A6A6A;white-space:pre;left:2018.00px;width:100px;text-align:right;">0</div><div style="top:365.39px;font-family:'Liberation Serif', serif;font-size:27px;line-height:27px;color:#6A6A6A;white-space:pre;left:1895.00px;letter-spacing:0.45px;">Thuế VAT:</div><div style="top:365.39px;font-family:'Liberation Serif', serif;font-size:27px;line-height:27px;color:#6A6A6A;white-space:pre;left:2018.00px;width:100px;text-align:right;">0</div><div style="left:2122px;top:61px;width:279px;height:3px;background:#76767A;"></div><div style="left:2122px;top:61px;width:3px;height:264px;background:#76767A;"></div><div style="left:2400px;top:64px;width:1px;height:261px;background:#F6F6FA;"></div><div style="left:2128px;top:67px;width:138px;height:43px;background:#FFFFFF;border:1.6px solid #8A8A8A;box-sizing:border-box;"></div><div style="top:72.39px;font-family:'Liberation Serif', serif;font-size:27px;line-height:27px;color:#000;white-space:pre;left:2146.00px;width:100px;text-align:center;">0</div><div style="left:2268px;top:80px;width:19px;height:18px;background:#fff;border:2px solid #48484C;box-sizing:border-box;"></div><div style="top:73.89px;font-family:'Liberation Serif', serif;font-size:27px;line-height:27px;color:#000;white-space:pre;left:2296.00px;">Làm tròn</div><div style="left:2125px;top:110px;width:275px;height:60px;overflow:hidden"><div style="position:absolute;left:36px;top:21.39px;font-family:'Liberation Serif', serif;font-size:27px;line-height:27px;white-space:pre;color:#000">Giá lẻ=số tiền*quy đổi</div></div><div style="left:2131px;top:138px;width:19px;height:19px;background:#fff;border:2px solid #48484C;box-sizing:border-box;"></div><div style="left:2131px;top:193px;width:19px;height:19px;background:#fff;border:2px solid #48484C;box-sizing:border-box;"></div><div style="top:187.89px;font-family:'Liberation Serif', serif;font-size:27px;line-height:27px;color:#000;white-space:pre;left:2161.00px;">Tự động tính ĐVT2</div><div style="left:2131px;top:244px;width:19px;height:19px;background:#fff;border:2px solid #48484C;box-sizing:border-box;"></div><div style="top:237.89px;font-family:'Liberation Serif', serif;font-size:27px;line-height:27px;color:#000;white-space:pre;left:2161.00px;">Giá lẻ=Giá vốn * %</div><div style="left:2131px;top:277px;width:269px;height:46px;background:#DCE6F2;border:1.6px solid #8A8A8A;box-sizing:border-box;"></div><div style="top:285.39px;font-family:'Liberation Serif', serif;font-size:27px;line-height:27px;color:#000;white-space:pre;left:2143.50px;letter-spacing:0.37px;">Reset Chiết khấu=0</div><div style="left:2121px;top:325px;width:281px;height:216px;background:#E6E6F4;"></div><div style="left:2121px;top:325px;width:281px;height:1px;background:#F6F6FA;"></div><div style="left:2401px;top:325px;width:1px;height:216px;background:#F6F6FA;"></div><div style="left:2127px;top:335px;width:19px;height:19px;background:#fff;border:2px solid #48484C;box-sizing:border-box;"></div><svg style="left:2127px;top:335px" width="19" height="19" viewBox="0 0 20 20"><path d="M4.3 9.6 L8.2 13.6 L15.6 6.2" fill="none" stroke="#4A4A4A" stroke-width="2.1"/></svg><div style="top:330.39px;font-family:'Liberation Serif', serif;font-size:27px;line-height:27px;color:#F00000;white-space:pre;left:2155.00px;letter-spacing:0.65px;">Nâng cao</div><div style="left:2127px;top:377px;width:19px;height:19px;background:#fff;border:2px solid #48484C;box-sizing:border-box;"></div><div style="top:371.39px;font-family:'Liberation Serif', serif;font-size:27px;line-height:27px;color:#000;white-space:pre;left:2156.00px;">Ngưng bán</div><div style="left:2286px;top:328px;width:112px;height:79px;background:#DCE6F2;border:2px solid #8C8C92;box-sizing:border-box;"></div><div style="top:336.89px;font-family:'Liberation Serif', serif;font-size:27px;line-height:27px;color:#000;white-space:pre;left:2264.50px;width:150px;text-align:center;letter-spacing:0.4px;">Chụp</div><div style="top:368.59px;font-family:'Liberation Serif', serif;font-size:27px;line-height:27px;color:#000;white-space:pre;left:2264.50px;width:150px;text-align:center;letter-spacing:0.4px;">hình</div><div style="left:2123px;top:409px;width:96px;height:44px;background:#DCE6F2;border:1.6px solid #8A8A8A;box-sizing:border-box;"></div><div style="top:413.39px;font-family:'Liberation Serif', serif;font-size:27px;line-height:27px;color:#F00000;white-space:pre;left:2131.00px;width:80px;text-align:center;">9</div><div style="left:2217px;top:409px;width:181px;height:44px;background:#DCE6F2;border:1.6px solid #8A8A8A;box-sizing:border-box;"></div><div style="top:417.39px;font-family:'Liberation Serif', serif;font-size:27px;line-height:27px;color:#000;white-space:pre;left:2222.00px;">HH ngưng bán</div><div style="left:488px;top:403px;width:425px;height:43px;background:#FFFFFF;border:1.5px solid #D0D0D0;box-sizing:border-box;"></div><div style="left:488px;top:445px;width:765px;height:43px;background:#FFFFFF;border:1.5px solid #D0D0D0;box-sizing:border-box;"></div><div style="top:449.89px;font-family:'Liberation Serif', serif;font-size:27px;line-height:27px;color:#6A6A6A;white-space:pre;left:491.50px;">Nhà cung cấp</div><div style="left:491px;top:497px;width:420px;height:45px;background:#FFFFFF;border:1.6px solid #6A6A6A;box-sizing:border-box;"></div><div style="top:502.29px;font-family:'Liberation Serif', serif;font-size:29.5px;line-height:29.5px;color:#000;white-space:pre;left:494.50px;font-style:italic;letter-spacing:0.35px;">Tìm kiếm sản phẩm</div><div style="left:920px;top:497px;width:152px;height:45px;background:#FFFF00;border:1.6px solid #4A4A4A;box-sizing:border-box;"></div><div style="top:504.89px;font-family:'Liberation Serif', serif;font-size:27px;line-height:27px;color:#F00000;white-space:pre;left:919.00px;width:150px;text-align:center;letter-spacing:0.4px;">Thẻ kho</div><div style="left:1080px;top:497px;width:231px;height:45px;background:#FFFFFF;"></div><div style="left:1286px;top:498px;width:25px;height:43px;background:#F0F0F0;"></div><svg style="left:1292.5px;top:516px" width="12" height="8" viewBox="0 0 12 8"><path d="M2 1.5 L10 1.5 L6 6 Z" fill="#000"/></svg><div style="top:504.05px;font-family:'Liberation Serif', serif;font-size:28px;line-height:28px;color:#000;white-space:pre;left:1087.50px;letter-spacing:0.5px;">Tất cả</div><div style="left:1320px;top:497px;width:480px;height:45px;background:#FFFFFF;"></div><div style="left:1775px;top:498px;width:25px;height:43px;background:#F0F0F0;"></div><svg style="left:1781.5px;top:516px" width="12" height="8" viewBox="0 0 12 8"><path d="M2 1.5 L10 1.5 L6 6 Z" fill="#000"/></svg><div style="left:1809px;top:497px;width:300px;height:45px;background:#FFFFFF;"></div><div style="left:2084px;top:498px;width:25px;height:43px;background:#F0F0F0;"></div><svg style="left:2090.5px;top:516px" width="12" height="8" viewBox="0 0 12 8"><path d="M2 1.5 L10 1.5 L6 6 Z" fill="#000"/></svg></body></html>
